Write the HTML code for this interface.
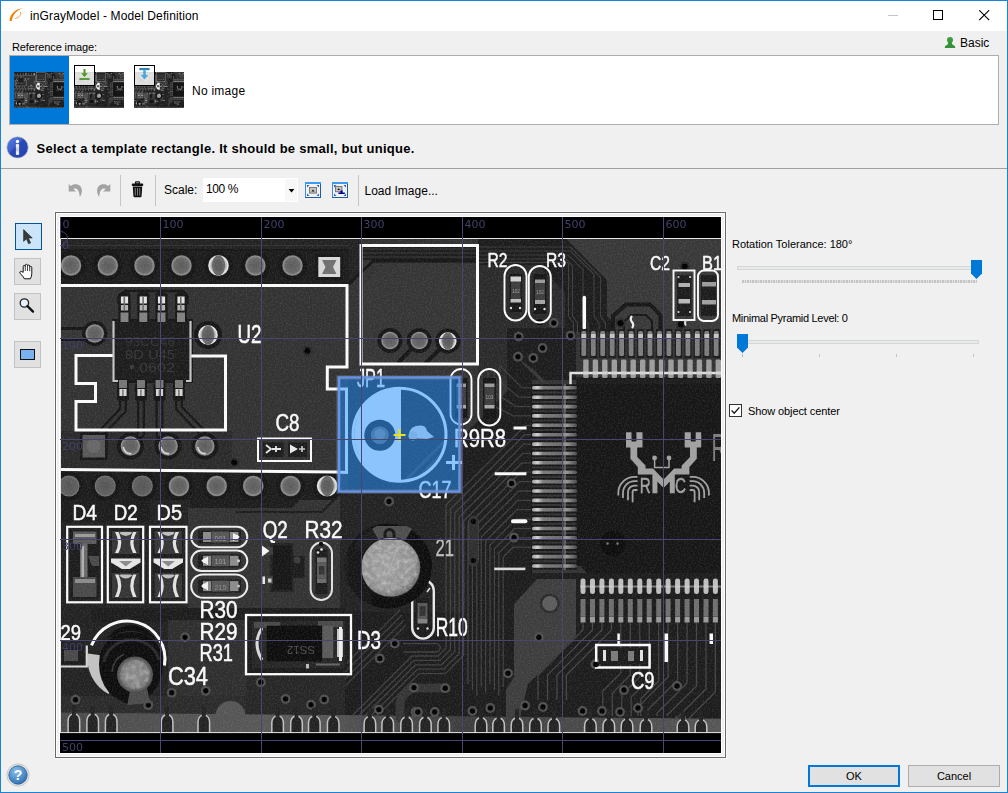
<!DOCTYPE html>
<html lang="en">
<head>
<meta charset="utf-8">
<title>inGrayModel - Model Definition</title>
<style>
html,body{margin:0;padding:0;}
body{width:1008px;height:793px;overflow:hidden;background:#f0f0f0;font-family:"Liberation Sans",sans-serif;font-size:12px;color:#000;position:relative;}
.abs{position:absolute;}
#win{position:absolute;left:0;top:0;width:1006px;height:791px;border:1px solid #1883d7;background:#f0f0f0;}
#title{position:absolute;left:1px;top:1px;width:1006px;height:30px;background:#fff;}
#title .t{position:absolute;left:29px;top:8px;font-size:12px;white-space:nowrap;letter-spacing:0.13px;}
.lbl{position:absolute;white-space:nowrap;}
#list{position:absolute;left:9px;top:55px;width:988px;height:68px;border:1px solid #adadad;background:#fff;}
#sel{position:absolute;left:10px;top:56px;width:59px;height:68px;background:#0078d7;}
.sep{position:absolute;background:#a0a0a0;}
.tool{position:absolute;width:25px;height:25px;border:1px solid #adadad;background:#e1e1e1;box-sizing:border-box;}
.btn{position:absolute;box-sizing:border-box;background:#e1e1e1;border:1px solid #adadad;text-align:center;font-size:12px;}
</style>
</head>
<body>
<div id="win"></div>
<div id="title">
  <svg class="abs" style="left:-1px;top:-1px" width="30" height="30" viewBox="0 0 30 30"><path d="M9.5 20.8 C9.8 14 15 9.2 23 7.9 C16.4 10.6 12.6 14.6 11.9 20.4 Q10.6 21.4 9.5 20.8 Z" fill="#f08000"/><path d="M20.5 12 C21.2 15 19.6 17.6 15.2 18.5" fill="none" stroke="#f39a35" stroke-width="0.9"/></svg>
  <span class="t">inGrayModel - Model Definition</span>
  <svg class="abs" style="left:887px;top:8px" width="12" height="12"><path d="M0 6.5H10" stroke="#c4c4c4" stroke-width="1"/></svg>
  <svg class="abs" style="left:932px;top:9px" width="12" height="12"><rect x="0.5" y="0.5" width="9" height="9" fill="none" stroke="#000" stroke-width="1"/></svg>
  <svg class="abs" style="left:978px;top:9px" width="12" height="12"><path d="M0.2 0.2L10.2 10.2M10.2 0.2L0.2 10.2" stroke="#000" stroke-width="1.1"/></svg>
</div>

<span class="lbl" style="left:12px;top:41px;font-size:11px;letter-spacing:-0.12px;">Reference image:</span>
<svg class="abs" style="left:944px;top:36px" width="12" height="13" viewBox="0 0 12 13"><circle cx="6" cy="4" r="3" fill="#3f9a3f"/><path d="M4.6 5.6 L3.6 8.6 L0.9 10.2 V12 H11.1 V10.2 L8.4 8.6 L7.4 5.6 Z" fill="#36913a"/></svg>
<span class="lbl" style="left:960px;top:36px;font-size:12px;">Basic</span>

<div id="list"></div>
<div id="sel"></div>
<svg width="0" height="0" style="position:absolute"><symbol id="th" viewBox="61 239 660 493.5" preserveAspectRatio="none"><rect x="60" y="238" width="662" height="496" fill="#323232" />
<rect x="60" y="238" width="289" height="48" fill="#1a1a1a" />
<rect x="60" y="238" width="289" height="13" fill="#242424" />
<polyline points="60,245.5 349,245.5" fill="none" stroke="#303030" stroke-width="1.2" />
<polyline points="60,250 349,250" fill="none" stroke="#181818" stroke-width="2" />
<rect x="60" y="431" width="172" height="38" fill="#2a2a2a" />
<polygon points="60,471 337,473 337,500 300,500 290,510 60,510" fill="#1a1a1a" />
<rect x="60" y="500" width="130" height="112" fill="#222" />
<rect x="60" y="500" width="90" height="22" fill="#1e1e1e" />
<rect x="188" y="508" width="157" height="104" fill="#303030" />
<polygon points="300,500 337,500 337,478 345,470 345,510 290,510" fill="#303030" />
<polygon points="349,238 361,238 361,272 349,284" fill="#222" />
<rect x="478" y="238" width="97" height="142" fill="#2b2b2b" />
<polygon points="566,238 722,238 722,332 613,332 613,323 607,316 607,280" fill="#383838" />
<polygon points="507,328 576,328 576,380 532,380 532,573 722,573 722,734 340,734 340,612 345,500 462,500 462,437 507,392" fill="#1d1d1d" />
<rect x="340" y="493" width="125" height="119" fill="#242424" />
<rect x="60" y="608" width="190" height="108" fill="#242424" />
<rect x="92" y="608" width="158" height="14" fill="#1a1a1a" />
<rect x="168" y="620" width="78" height="80" fill="#2e2e2e" />
<rect x="60" y="696" width="190" height="18" fill="#2c2c2c" />
<rect x="246" y="608" width="99" height="70" fill="#1e1e1e" />
<rect x="246" y="676" width="99" height="40" fill="#252525" />
<polygon points="60,712.5 722,718.8 722,734 60,734" fill="url(#bandg)" />
<circle cx="230.5" cy="716" r="15" fill="#555" />
<polygon points="537,579 576,579 576,636 528,684 522,709 520,718 506,718 506,690 514,677 514,604" fill="#3e3e3e" />
<circle cx="549.8" cy="603.5" r="10" fill="#2c2c2c" />
<circle cx="549.8" cy="603.5" r="7.5" fill="#5c5c5c" />
<polyline points="531,425.3 525.7,425.3 446,505 446,648 438,656 412,656 352,716" fill="none" stroke="#3f3f3f" stroke-width="1.3" stroke-linejoin="round"/>
<polyline points="531,434.7 524.7,434.7 450.4,509 450.4,649.8 439.8,660.4 413.8,660.4 358.2,716" fill="none" stroke="#3f3f3f" stroke-width="1.3" stroke-linejoin="round"/>
<polyline points="531,444.1 523.7,444.1 454.8,513 454.8,651.6 441.6,664.8 415.6,664.8 364.4,716" fill="none" stroke="#3f3f3f" stroke-width="1.3" stroke-linejoin="round"/>
<polyline points="531,453.4 522.8,453.4 459.2,517 459.2,653.5 443.5,669.2 417.5,669.2 370.6,716" fill="none" stroke="#3f3f3f" stroke-width="1.3" stroke-linejoin="round"/>
<polyline points="531,462.8 521.8,462.8 463.6,521 463.6,655.3 445.3,673.6 419.3,673.6 376.8,716" fill="none" stroke="#3f3f3f" stroke-width="1.3" stroke-linejoin="round"/>
<polyline points="531,472.2 520.8,472.2 468,525 468,684" fill="none" stroke="#3f3f3f" stroke-width="1.3" />
<polyline points="531,481.6 519.8,481.6 472.4,529 472.4,690" fill="none" stroke="#3f3f3f" stroke-width="1.3" />
<polyline points="531,491 518.8,491 476.8,533 476.8,696" fill="none" stroke="#3f3f3f" stroke-width="1.3" />
<polyline points="531,500.3 517.9,500.3 481.2,537 481.2,687" fill="none" stroke="#3f3f3f" stroke-width="1.3" />
<polyline points="531,509.7 516.9,509.7 485.6,541 485.6,693" fill="none" stroke="#3f3f3f" stroke-width="1.3" />
<polyline points="531,519.1 515.9,519.1 490,545 490,684" fill="none" stroke="#3f3f3f" stroke-width="1.3" />
<polyline points="531,528.5 514.9,528.5 494.4,549 494.4,690" fill="none" stroke="#3f3f3f" stroke-width="1.3" />
<polyline points="531,537.9 513.9,537.9 498.8,553 498.8,696" fill="none" stroke="#3f3f3f" stroke-width="1.3" />
<polyline points="531,547.2 513,547.2 503.2,557 503.2,687" fill="none" stroke="#3f3f3f" stroke-width="1.3" />
<path d="M403 643.6 H436 a4.2 4.2 0 0 1 0 8.4 H404" fill="none" stroke="#3f3f3f" stroke-width="1.3"/>
<polyline points="400,610 345,665" fill="none" stroke="#3a3a3a" stroke-width="1.2" />
<polyline points="402,615 345,672" fill="none" stroke="#3a3a3a" stroke-width="1.2" />
<polyline points="404,620 345,679" fill="none" stroke="#3a3a3a" stroke-width="1.2" />
<polyline points="406,625 345,686" fill="none" stroke="#3a3a3a" stroke-width="1.2" />
<path d="M400 718 V706 Q400 692 414 688 H446" fill="none" stroke="#343434" stroke-width="9" stroke-linecap="round"/>
<polyline points="531,387.8 522,387.8 500,365.8 500,372" fill="none" stroke="#3c3c3c" stroke-width="1.2" />
<polyline points="531,397.2 519,397.2 494,377.2 494,372" fill="none" stroke="#3c3c3c" stroke-width="1.2" />
<polyline points="531,406.6 516,406.6 488,388.6 488,372" fill="none" stroke="#3c3c3c" stroke-width="1.2" />
<polyline points="531,415.9 513,415.9 482,399.9 482,372" fill="none" stroke="#3c3c3c" stroke-width="1.2" />
<polyline points="583,623 583,630 538,675 538,700" fill="none" stroke="#454545" stroke-width="1.2" />
<polyline points="592.5,623 592.5,630 547.5,675 547.5,700" fill="none" stroke="#454545" stroke-width="1.2" />
<polyline points="601.9,623 601.9,630 556.9,675 556.9,700" fill="none" stroke="#454545" stroke-width="1.2" />
<polyline points="611.4,623 611.4,630 566.4,675 566.4,700" fill="none" stroke="#454545" stroke-width="1.2" />
<polyline points="620.8,623 620.8,673 602.8,691 602.8,716" fill="none" stroke="#454545" stroke-width="1.2" />
<polyline points="630.3,623 630.3,675 612.3,693 612.3,716" fill="none" stroke="#454545" stroke-width="1.2" />
<polyline points="639.8,623 639.8,677 621.8,695 621.8,716" fill="none" stroke="#454545" stroke-width="1.2" />
<polyline points="649.2,623 649.2,679 631.2,697 631.2,716" fill="none" stroke="#454545" stroke-width="1.2" />
<polyline points="658.7,623 658.7,681 640.7,699 640.7,716" fill="none" stroke="#454545" stroke-width="1.2" />
<polyline points="668.1,623 668.1,677 638.1,707 638.1,716" fill="none" stroke="#454545" stroke-width="1.2" />
<polyline points="677.6,623 677.6,680 647.6,710 647.6,716" fill="none" stroke="#454545" stroke-width="1.2" />
<polyline points="687.1,623 687.1,683 657.1,713 657.1,716" fill="none" stroke="#454545" stroke-width="1.2" />
<polyline points="696.5,623 696.5,686 666.5,716 666.5,716" fill="none" stroke="#454545" stroke-width="1.2" />
<polyline points="706,623 706,689 676,719 676,716" fill="none" stroke="#454545" stroke-width="1.2" />
<polyline points="715.4,623 715.4,692 685.4,722 685.4,716" fill="none" stroke="#454545" stroke-width="1.2" />
<polygon points="478,239 566,239 607,280 607,316 613,323 613,332 565,332 565,292 538,265 478,265" fill="#1b1b1b" />
<polyline points="478,247 570.2,247 600.5,277.3 600.5,316 605.5,323 605.5,332" fill="none" stroke="#3c3c3c" stroke-width="1.2" />
<polyline points="478,251 570.5,251 594,274.5 594,316 599,323 599,332" fill="none" stroke="#3c3c3c" stroke-width="1.2" />
<polyline points="478,255 568.1,255 583,269.9 583,316 588,323 588,332" fill="none" stroke="#3c3c3c" stroke-width="1.2" />
<polyline points="478,259 566,259 572.5,265.5 572.5,316 577.5,323 577.5,332" fill="none" stroke="#3c3c3c" stroke-width="1.2" />
<polyline points="478,262.3 567,262.3 568.5,263.8 568.5,316 573.5,323 573.5,332" fill="none" stroke="#3c3c3c" stroke-width="1.2" />
<polyline points="613,330 613,316 626,304.5 650,304.5 660.5,315 660.5,332" fill="none" stroke="#181818" stroke-width="4" />
<polyline points="624,332 624,322 631,315 646,315 652,321 652,332" fill="none" stroke="#181818" stroke-width="2" />
<polyline points="520,360 545,385 531,400" fill="none" stroke="#3a3a3a" stroke-width="1.1" />
<polyline points="524,363 549,388 531,409" fill="none" stroke="#3a3a3a" stroke-width="1.1" />
<polyline points="528,366 553,391 531,418" fill="none" stroke="#3a3a3a" stroke-width="1.1" />
<polyline points="532,369 557,394 531,427" fill="none" stroke="#3a3a3a" stroke-width="1.1" />
<polygon points="362,286 386,262 476,262 476,363 362,363" fill="#343434" />
<rect x="362" y="246" width="114" height="14" fill="#1e1e1e" />
<polyline points="362,249 476,249" fill="none" stroke="#353535" stroke-width="1" />
<polyline points="362,253 476,253" fill="none" stroke="#353535" stroke-width="1" />
<polyline points="362,257 476,257" fill="none" stroke="#353535" stroke-width="1" />
<polyline points="349,284 373,261 476,261" fill="none" stroke="#151515" stroke-width="3" />
<polyline points="448,341 424,365" fill="none" stroke="#171717" stroke-width="4" />
<polyline points="419,341 398,363" fill="none" stroke="#171717" stroke-width="4" />
<polyline points="123,397 123,410 103,431 97,438" fill="none" stroke="#161616" stroke-width="8" stroke-linejoin="round"/>
<polyline points="123,397 123,410 103,431 97,438" fill="none" stroke="#333" stroke-width="3.5" stroke-linejoin="round"/>
<polyline points="141,397 141,434 134,441" fill="none" stroke="#161616" stroke-width="8" stroke-linejoin="round"/>
<polyline points="141,397 141,434 134,441" fill="none" stroke="#333" stroke-width="3.5" stroke-linejoin="round"/>
<polyline points="159.5,397 159.5,436 165,442" fill="none" stroke="#161616" stroke-width="8" stroke-linejoin="round"/>
<polyline points="159.5,397 159.5,436 165,442" fill="none" stroke="#333" stroke-width="3.5" stroke-linejoin="round"/>
<polyline points="179,397 179,408 201,431 204,438" fill="none" stroke="#161616" stroke-width="8" stroke-linejoin="round"/>
<polyline points="179,397 179,408 201,431 204,438" fill="none" stroke="#333" stroke-width="3.5" stroke-linejoin="round"/>
<rect x="60" y="327" width="35" height="14" fill="#191919" />
<rect x="60" y="330" width="35" height="8" fill="#363636" />
<polyline points="236,512 322,512 345,489" fill="none" stroke="#1b1b1b" stroke-width="2" />
<circle cx="71" cy="265.5" r="14" fill="#161616" />
<circle cx="71" cy="265.5" r="10.5" fill="url(#pg)" />
<circle cx="107.8" cy="265.5" r="14" fill="#161616" />
<circle cx="107.8" cy="265.5" r="10.5" fill="url(#pg)" />
<circle cx="144.5" cy="265.5" r="14" fill="#161616" />
<circle cx="144.5" cy="265.5" r="10.5" fill="url(#pg)" />
<circle cx="181.5" cy="265.5" r="14" fill="#161616" />
<circle cx="181.5" cy="265.5" r="10.5" fill="url(#pg)" />
<circle cx="218.5" cy="265.5" r="14" fill="#161616" />
<circle cx="218.5" cy="265.5" r="10.5" fill="url(#pgb)" />
<ellipse cx="218.5" cy="265.5" rx="6.5" ry="10.3" fill="#686868"/>
<ellipse cx="218.5" cy="265.5" rx="4.2" ry="6.3" fill="#5c5c5c"/>
<circle cx="255.4" cy="265.5" r="14" fill="#161616" />
<circle cx="255.4" cy="265.5" r="10.5" fill="url(#pg)" />
<circle cx="292.5" cy="265.5" r="14" fill="#161616" />
<circle cx="292.5" cy="265.5" r="10.5" fill="url(#pg)" />
<rect x="315" y="254" width="28" height="26" fill="#141414" />
<rect x="318.3" y="257" width="21.9" height="20" fill="#d8d8d8" />
<polygon points="322,260 336.5,260 333,267 336.5,274 322,274 325.5,267" fill="#707070" />
<rect x="80" y="432.5" width="27.5" height="27.5" fill="#151515" />
<rect x="82.5" y="435" width="22.5" height="22.5" fill="#585858" />
<circle cx="93.7" cy="446" r="7" fill="#666" />
<circle cx="130.4" cy="446" r="13.5" fill="#161616" />
<circle cx="130.4" cy="446" r="10" fill="url(#pg)" />
<path d="M123.4 447 A7 7 0 0 0 131.4 453.5" stroke="#d8d8d8" stroke-width="1.6" fill="none"/>
<circle cx="168.1" cy="446" r="13.5" fill="#161616" />
<circle cx="168.1" cy="446" r="10" fill="url(#pg)" />
<path d="M161.1 447 A7 7 0 0 0 169.1 453.5" stroke="#d8d8d8" stroke-width="1.6" fill="none"/>
<circle cx="204.8" cy="446" r="13.5" fill="#161616" />
<circle cx="204.8" cy="446" r="10" fill="url(#pg)" />
<path d="M197.8 447 A7 7 0 0 0 205.8 453.5" stroke="#d8d8d8" stroke-width="1.6" fill="none"/>
<circle cx="69" cy="486" r="14" fill="#161616" />
<circle cx="69" cy="486" r="10.5" fill="url(#pgd)" />
<circle cx="105.2" cy="486" r="14" fill="#161616" />
<circle cx="105.2" cy="486" r="10.5" fill="url(#pgd)" />
<circle cx="142.3" cy="486" r="14" fill="#161616" />
<circle cx="142.3" cy="486" r="10.5" fill="url(#pgd)" />
<circle cx="179" cy="486" r="14" fill="#161616" />
<circle cx="179" cy="486" r="10.5" fill="url(#pg)" />
<circle cx="216.7" cy="486" r="14" fill="#161616" />
<circle cx="216.7" cy="486" r="10.5" fill="url(#pg)" />
<circle cx="253.2" cy="486" r="14" fill="#161616" />
<circle cx="253.2" cy="486" r="10.5" fill="url(#pg)" />
<circle cx="290.5" cy="486" r="14" fill="#161616" />
<circle cx="290.5" cy="486" r="10.5" fill="url(#pg)" />
<circle cx="327.2" cy="486" r="14" fill="#161616" />
<circle cx="327.2" cy="486" r="10.5" fill="url(#pgb)" />
<ellipse cx="327.2" cy="486" rx="6.5" ry="10.3" fill="#686868"/>
<ellipse cx="327.2" cy="486" rx="4.2" ry="6.3" fill="#5c5c5c"/>
<circle cx="94.7" cy="333.5" r="12.5" fill="#161616" />
<circle cx="94.7" cy="333.5" r="9.5" fill="url(#pg)" />
<circle cx="208" cy="335" r="14" fill="#161616" />
<circle cx="208" cy="335" r="10" fill="url(#pgb)" />
<ellipse cx="208" cy="335" rx="6.2" ry="9.8" fill="#686868"/>
<ellipse cx="208" cy="335" rx="4" ry="6" fill="#5c5c5c"/>
<circle cx="390" cy="340.5" r="12.5" fill="#161616" />
<circle cx="390" cy="340.5" r="9" fill="url(#pg)" />
<circle cx="419.2" cy="340.5" r="12.5" fill="#161616" />
<circle cx="419.2" cy="340.5" r="9" fill="url(#pg)" />
<circle cx="447.8" cy="341" r="12.5" fill="#161616" />
<circle cx="447.8" cy="341" r="9" fill="url(#pgb)" />
<ellipse cx="447.8" cy="341" rx="5.6" ry="8.8" fill="#686868"/>
<ellipse cx="447.8" cy="341" rx="3.6" ry="5.4" fill="#5c5c5c"/>
<circle cx="234.2" cy="462.6" r="5" fill="#2a2a2a" />
<circle cx="234.2" cy="462.6" r="3" fill="#050505" />
<circle cx="307.4" cy="350.7" r="5" fill="#2a2a2a" />
<circle cx="307.4" cy="350.7" r="3" fill="#050505" />
<circle cx="539.9" cy="322.3" r="5" fill="#2a2a2a" />
<circle cx="539.9" cy="322.3" r="3" fill="#050505" />
<circle cx="684.8" cy="266.4" r="5" fill="#2a2a2a" />
<circle cx="684.8" cy="266.4" r="3" fill="#050505" />
<circle cx="681" cy="324.6" r="5" fill="#2a2a2a" />
<circle cx="681" cy="324.6" r="3" fill="#050505" />
<circle cx="620.5" cy="323" r="5" fill="#2a2a2a" />
<circle cx="620.5" cy="323" r="3" fill="#050505" />
<circle cx="553.8" cy="323" r="4.9" fill="#505050" />
<circle cx="553.8" cy="323" r="2.7" fill="#050505" />
<circle cx="518.7" cy="336.6" r="4.9" fill="#505050" />
<circle cx="518.7" cy="336.6" r="2.7" fill="#050505" />
<circle cx="542.5" cy="348" r="4.9" fill="#505050" />
<circle cx="542.5" cy="348" r="2.7" fill="#050505" />
<circle cx="518" cy="356.7" r="4.9" fill="#505050" />
<circle cx="518" cy="356.7" r="2.7" fill="#050505" />
<circle cx="533.3" cy="358" r="4.9" fill="#505050" />
<circle cx="533.3" cy="358" r="2.7" fill="#050505" />
<circle cx="570.6" cy="335.6" r="4.9" fill="#505050" />
<circle cx="570.6" cy="335.6" r="2.7" fill="#050505" />
<circle cx="511.5" cy="483.4" r="4.9" fill="#505050" />
<circle cx="511.5" cy="483.4" r="2.7" fill="#050505" />
<circle cx="389" cy="501.5" r="4.9" fill="#505050" />
<circle cx="389" cy="501.5" r="2.7" fill="#050505" />
<circle cx="185" cy="637.2" r="4.9" fill="#505050" />
<circle cx="185" cy="637.2" r="2.7" fill="#050505" />
<circle cx="75.5" cy="699.7" r="4.9" fill="#505050" />
<circle cx="75.5" cy="699.7" r="2.7" fill="#050505" />
<circle cx="148.3" cy="705" r="4.9" fill="#505050" />
<circle cx="148.3" cy="705" r="2.7" fill="#050505" />
<circle cx="171.7" cy="692.8" r="4.9" fill="#505050" />
<circle cx="171.7" cy="692.8" r="2.7" fill="#050505" />
<circle cx="205.8" cy="690.8" r="4.9" fill="#505050" />
<circle cx="205.8" cy="690.8" r="2.7" fill="#050505" />
<circle cx="260.8" cy="682.3" r="4.9" fill="#505050" />
<circle cx="260.8" cy="682.3" r="2.7" fill="#050505" />
<circle cx="285.6" cy="699" r="4.9" fill="#505050" />
<circle cx="285.6" cy="699" r="2.7" fill="#050505" />
<circle cx="311" cy="704.7" r="4.9" fill="#505050" />
<circle cx="311" cy="704.7" r="2.7" fill="#050505" />
<circle cx="324.2" cy="699.5" r="4.9" fill="#505050" />
<circle cx="324.2" cy="699.5" r="2.7" fill="#050505" />
<circle cx="379.8" cy="658.5" r="4.9" fill="#505050" />
<circle cx="379.8" cy="658.5" r="2.7" fill="#050505" />
<circle cx="378.8" cy="709.6" r="4.9" fill="#505050" />
<circle cx="378.8" cy="709.6" r="2.7" fill="#050505" />
<circle cx="415.5" cy="712" r="4.9" fill="#505050" />
<circle cx="415.5" cy="712" r="2.7" fill="#050505" />
<circle cx="394.7" cy="643.6" r="4.9" fill="#505050" />
<circle cx="394.7" cy="643.6" r="2.7" fill="#050505" />
<circle cx="538.9" cy="637.2" r="4.9" fill="#505050" />
<circle cx="538.9" cy="637.2" r="2.7" fill="#050505" />
<circle cx="508" cy="673.3" r="4.9" fill="#505050" />
<circle cx="508" cy="673.3" r="2.7" fill="#050505" />
<circle cx="445.2" cy="688.2" r="4.9" fill="#505050" />
<circle cx="445.2" cy="688.2" r="2.7" fill="#050505" />
<circle cx="413.9" cy="687.6" r="4.9" fill="#505050" />
<circle cx="413.9" cy="687.6" r="2.7" fill="#050505" />
<circle cx="417.9" cy="712" r="4.9" fill="#505050" />
<circle cx="417.9" cy="712" r="2.7" fill="#050505" />
<circle cx="434.7" cy="712" r="4.9" fill="#505050" />
<circle cx="434.7" cy="712" r="2.7" fill="#050505" />
<circle cx="472.4" cy="711" r="4.9" fill="#505050" />
<circle cx="472.4" cy="711" r="2.7" fill="#050505" />
<circle cx="490.3" cy="708" r="4.9" fill="#505050" />
<circle cx="490.3" cy="708" r="2.7" fill="#050505" />
<circle cx="525" cy="705.5" r="4.9" fill="#505050" />
<circle cx="525" cy="705.5" r="2.7" fill="#050505" />
<circle cx="542.9" cy="707" r="4.9" fill="#505050" />
<circle cx="542.9" cy="707" r="2.7" fill="#050505" />
<circle cx="582.5" cy="711" r="4.9" fill="#505050" />
<circle cx="582.5" cy="711" r="2.7" fill="#050505" />
<circle cx="595.4" cy="664.4" r="4.9" fill="#505050" />
<circle cx="595.4" cy="664.4" r="2.7" fill="#050505" />
<circle cx="473.4" cy="521.5" r="4.9" fill="#505050" />
<circle cx="473.4" cy="521.5" r="2.7" fill="#050505" />
<circle cx="473.4" cy="560.5" r="4.9" fill="#505050" />
<circle cx="473.4" cy="560.5" r="2.7" fill="#050505" />
<circle cx="514" cy="537.5" r="4.9" fill="#505050" />
<circle cx="514" cy="537.5" r="2.7" fill="#050505" />
<circle cx="624" cy="690" r="4.9" fill="#505050" />
<circle cx="624" cy="690" r="2.7" fill="#050505" />
<circle cx="677" cy="686" r="4.9" fill="#505050" />
<circle cx="677" cy="686" r="2.7" fill="#050505" />
<circle cx="638" cy="708" r="4.9" fill="#505050" />
<circle cx="638" cy="708" r="2.7" fill="#050505" />
<circle cx="602" cy="711" r="4.9" fill="#505050" />
<circle cx="602" cy="711" r="2.7" fill="#050505" />
<circle cx="620" cy="712" r="4.9" fill="#505050" />
<circle cx="620" cy="712" r="2.7" fill="#050505" />
<circle cx="596" cy="664" r="4.9" fill="#505050" />
<circle cx="596" cy="664" r="2.7" fill="#050505" />
<rect x="468.5" y="516.5" width="10" height="49" rx="5" fill="#2e2e2e" stroke="#3a3a3a" stroke-width="1"/>
<circle cx="473.4" cy="521.5" r="2.6" fill="#050505" />
<circle cx="473.4" cy="560.5" r="2.6" fill="#050505" />
<rect x="112" y="319" width="81" height="64" fill="#181818" />
<rect x="115" y="321.5" width="75" height="59" fill="#1d1d1d" />
<polyline points="118.5,304 118.5,297 125,291 183,291 187.5,296 187.5,304" fill="none" stroke="#161616" stroke-width="2.5" />
<rect x="118.5" y="292.5" width="12" height="30" rx="3" fill="#141414"/>
<rect x="120.9" y="296.5" width="7.2" height="7" fill="#e4e4e4" />
<rect x="120.9" y="305" width="7.2" height="5.5" fill="#b4b4b4" />
<rect x="123.5" y="297" width="1.6" height="13" fill="#6a6a6a" />
<rect x="120.5" y="312.5" width="8" height="9.5" fill="#808080" />
<rect x="137.3" y="292.5" width="12" height="30" rx="3" fill="#141414"/>
<rect x="139.7" y="296.5" width="7.2" height="7" fill="#e4e4e4" />
<rect x="139.7" y="305" width="7.2" height="5.5" fill="#b4b4b4" />
<rect x="142.3" y="297" width="1.6" height="13" fill="#6a6a6a" />
<rect x="139.3" y="312.5" width="8" height="9.5" fill="#808080" />
<rect x="155.5" y="292.5" width="12" height="30" rx="3" fill="#141414"/>
<rect x="157.9" y="296.5" width="7.2" height="7" fill="#e4e4e4" />
<rect x="157.9" y="305" width="7.2" height="5.5" fill="#b4b4b4" />
<rect x="160.5" y="297" width="1.6" height="13" fill="#6a6a6a" />
<rect x="157.5" y="312.5" width="8" height="9.5" fill="#808080" />
<rect x="175" y="292.5" width="12" height="30" rx="3" fill="#141414"/>
<rect x="177.4" y="296.5" width="7.2" height="7" fill="#e4e4e4" />
<rect x="177.4" y="305" width="7.2" height="5.5" fill="#b4b4b4" />
<rect x="180" y="297" width="1.6" height="13" fill="#6a6a6a" />
<rect x="177" y="312.5" width="8" height="9.5" fill="#808080" />
<rect x="117" y="379" width="12" height="22" rx="3" fill="#141414"/>
<rect x="119" y="380" width="8" height="8" fill="#747474" />
<rect x="119.4" y="389" width="7.2" height="7" fill="#d4d4d4" />
<rect x="122.2" y="389.5" width="1.4" height="6.5" fill="#6a6a6a" />
<rect x="135" y="379" width="12" height="22" rx="3" fill="#141414"/>
<rect x="137" y="380" width="8" height="8" fill="#747474" />
<rect x="137.4" y="389" width="7.2" height="7" fill="#d4d4d4" />
<rect x="140.2" y="389.5" width="1.4" height="6.5" fill="#6a6a6a" />
<rect x="153.5" y="379" width="12" height="22" rx="3" fill="#141414"/>
<rect x="155.5" y="380" width="8" height="8" fill="#747474" />
<rect x="155.9" y="389" width="7.2" height="7" fill="#d4d4d4" />
<rect x="158.7" y="389.5" width="1.4" height="6.5" fill="#6a6a6a" />
<rect x="173" y="379" width="12" height="22" rx="3" fill="#141414"/>
<rect x="175" y="380" width="8" height="8" fill="#747474" />
<rect x="175.4" y="389" width="7.2" height="7" fill="#d4d4d4" />
<rect x="178.2" y="389.5" width="1.4" height="6.5" fill="#6a6a6a" />
<circle cx="132" cy="367" r="2.3" fill="#383838" />
<polyline points="60,285.5 347,285.5 347,367 327.3,367 327.3,389 346.5,389 346.5,472.5 336,472 60,469.5" fill="none" stroke="#fafafa" stroke-width="3" stroke-linejoin="miter"/>
<polyline points="113.5,355.5 76,355.5 76,383.5 95.5,383.5 95.5,401.5 76,401.5 76,430 225.5,430 225.5,356 190.5,356" fill="none" stroke="#fafafa" stroke-width="3" />
<polyline points="113.5,321 113.5,381 118,381" fill="none" stroke="#c4c4c4" stroke-width="2.2" />
<polyline points="190.5,321 190.5,381 186,381" fill="none" stroke="#c4c4c4" stroke-width="2.2" />
<rect x="361" y="245.5" width="116.5" height="118.5" rx="0" fill="none" stroke="#fafafa" stroke-width="3"/>
<rect x="348.5" y="378" width="113.5" height="116" fill="#2a2a2a" />
<g clip-path="url(#c17clip)">
<polyline points="396,490 456,430" fill="none" stroke="#424242" stroke-width="3" />
<polyline points="406,490 466,430" fill="none" stroke="#424242" stroke-width="3" />
<polyline points="416,490 476,430" fill="none" stroke="#424242" stroke-width="3" />
<polyline points="426,490 486,430" fill="none" stroke="#424242" stroke-width="3" />
<polyline points="436,490 496,430" fill="none" stroke="#424242" stroke-width="3" />
<polyline points="446,490 506,430" fill="none" stroke="#424242" stroke-width="3" />
<polyline points="456,490 516,430" fill="none" stroke="#424242" stroke-width="3" />
<polyline points="466,490 526,430" fill="none" stroke="#424242" stroke-width="3" />
<polyline points="476,490 536,430" fill="none" stroke="#424242" stroke-width="3" />
</g>
<circle cx="399.5" cy="434.8" r="46.5" fill="none" stroke="#fafafa" stroke-width="3"/>
<path d="M401 388 A46.8 46.8 0 0 0 401 481.6 Z" fill="#fafafa"/>
<circle cx="379.8" cy="435.2" r="15.5" fill="#262626" />
<circle cx="379.8" cy="435.2" r="9" fill="#6a6a6a" />
<circle cx="379.8" cy="434.2" r="5.5" fill="#8a8a8a" />
<path d="M409 438 Q408 428 416 426 Q426 424 427 431 L434 437 L427 439 Z" fill="#e4e4e4"/>
<circle cx="413" cy="436" r="4.5" fill="#d0d0d0" />
<rect x="258" y="438.5" width="53" height="22.5" rx="0" fill="none" stroke="#fafafa" stroke-width="2"/>
<rect x="263" y="442.5" width="20.5" height="14.5" fill="#1a1a1a" />
<rect x="288" y="442.5" width="19" height="14.5" fill="#1a1a1a" />
<path d="M266 445 l5 4 l-5 4 M272 449 h9 M276 446 v6" stroke="#e8e8e8" stroke-width="1.8" fill="none"/>
<path d="M290 444.5 l8 4.5 l-8 4.5 z" fill="#e8e8e8"/><path d="M299 449 h6 M302 446 v6" stroke="#ccc" stroke-width="1.6"/>
<rect x="504.5" y="265" width="22" height="55.5" rx="11" ry="11" fill="none" stroke="#fafafa" stroke-width="1.9"/>
<rect x="528.8" y="266" width="22" height="56.5" rx="11" ry="11" fill="none" stroke="#fafafa" stroke-width="1.9"/>
<rect x="509.5" y="274" width="12.5" height="38" fill="#191919" />
<rect x="511" y="281" width="9.5" height="18" fill="#3c3c3c" />
<rect x="510.5" y="276.5" width="10.5" height="5" fill="#d0d0d0" />
<rect x="510.5" y="299" width="10.5" height="3.5" fill="#bbb" />
<circle cx="511" cy="308" r="1.2" fill="#ddd" />
<circle cx="520" cy="308" r="1.2" fill="#ddd" />
<rect x="533.5" y="274" width="13" height="40" fill="#191919" />
<rect x="535" y="283" width="10" height="17" fill="#3e3e3e" />
<rect x="535" y="279.5" width="10" height="3.5" fill="#9a9a9a" />
<rect x="535" y="300" width="10" height="4" fill="#a5a5a5" />
<circle cx="535" cy="309" r="1.2" fill="#ddd" />
<circle cx="544.5" cy="309" r="1.2" fill="#ddd" />
<rect x="450.5" y="369" width="21" height="55.5" rx="10.5" ry="10.5" fill="none" stroke="#fafafa" stroke-width="1.9"/>
<rect x="478.2" y="369" width="22.1" height="56.5" rx="11.1" ry="11.1" fill="none" stroke="#fafafa" stroke-width="1.9"/>
<rect x="483" y="378" width="13" height="40" fill="#191919" />
<rect x="484.5" y="387" width="10" height="18" fill="#3e3e3e" />
<rect x="484.5" y="383.5" width="10" height="3.5" fill="#9a9a9a" />
<rect x="484.5" y="405" width="10" height="3.5" fill="#a5a5a5" />
<rect x="455" y="378" width="12.5" height="40" fill="#191919" />
<rect x="456.5" y="387" width="9.5" height="18" fill="#3e3e3e" />
<rect x="456.5" y="383.5" width="9.5" height="3.5" fill="#9a9a9a" />
<rect x="456.5" y="405" width="9.5" height="3.5" fill="#a5a5a5" />
<rect x="673.5" y="270.5" width="21" height="49.5" rx="0" fill="none" stroke="#fafafa" stroke-width="1.9"/>
<rect x="698" y="270.5" width="20" height="50.5" rx="6" fill="none" stroke="#fafafa" stroke-width="1.9"/>
<rect x="677" y="275" width="14.5" height="41" fill="#1a1a1a" />
<rect x="678.5" y="283" width="11.5" height="4" fill="#b0b0b0" />
<rect x="678.5" y="299" width="11.5" height="4.5" fill="#b8b8b8" />
<rect x="701" y="275" width="15" height="41" fill="#1a1a1a" />
<rect x="702" y="282" width="14" height="4.5" fill="#9a9a9a" />
<rect x="702" y="300" width="14" height="4.5" fill="#a0a0a0" />
<circle cx="678.5" cy="277" r="1.1" fill="#ddd" />
<circle cx="690" cy="277" r="1.1" fill="#ddd" />
<circle cx="678.5" cy="312" r="1.1" fill="#ddd" />
<circle cx="690" cy="312" r="1.1" fill="#ddd" />
<polyline points="584.3,297.5 584.3,328" fill="none" stroke="#fafafa" stroke-width="3.5" stroke-linecap="round"/>
<polyline points="513.5,428 526.5,428" fill="none" stroke="#fafafa" stroke-width="3" />
<polyline points="494.7,473.7 526.4,473.7" fill="none" stroke="#fafafa" stroke-width="3" />
<polyline points="513,521.3 525.4,521.3" fill="none" stroke="#fafafa" stroke-width="4" stroke-linecap="round"/>
<polyline points="494.2,568.9 525.4,568.9" fill="none" stroke="#d8d8d8" stroke-width="2.6" />
<polyline points="666.3,633.5 666.3,662" fill="none" stroke="#fafafa" stroke-width="3.5" />
<polyline points="711.3,633.5 711.3,644" fill="none" stroke="#fafafa" stroke-width="3.5" />
<polyline points="618.6,633.5 618.6,645" fill="none" stroke="#fafafa" stroke-width="2.5" />
<path d="M632 316 q-2.5 3 0 6 q2.5 3 0 6" stroke="#eee" stroke-width="2.2" fill="none"/>
<path d="M686 320 q-2 3 0 5.5" stroke="#ddd" stroke-width="2" fill="none"/>
<polyline points="446,462.5 462.5,462.5" fill="none" stroke="#fafafa" stroke-width="3" />
<polyline points="453.5,455 453.5,470" fill="none" stroke="#fafafa" stroke-width="3" />
<polyline points="570.5,386 570.5,373 722,373" fill="none" stroke="#e0e0e0" stroke-width="2.5" />
<polygon points="576.5,377.5 722,377.5 722,573 587,573 580.5,566 576.5,566" fill="#161616" />
<rect x="578" y="379" width="144" height="5" fill="#1c1c1c" />
<circle cx="613" cy="543.5" r="13" fill="#111" />
<circle cx="607.5" cy="543.5" r="1.2" fill="#777" />
<circle cx="617.5" cy="543.5" r="1.2" fill="#777" />
<rect x="580.2" y="329" width="7.2" height="29" fill="#1b1b1b" />
<rect x="581.4" y="331" width="4.8" height="25" rx="1.5" fill="#7c7c7c"/>
<rect x="581.4" y="334" width="4.8" height="4.5" fill="#c4c4c4" />
<rect x="583.2" y="359.5" width="5.4" height="18.5" rx="1.2" fill="#9c9c9c"/>
<rect x="583.2" y="371.5" width="5.4" height="3" fill="#d2d2d2" />
<rect x="589.7" y="329" width="7.2" height="29" fill="#1b1b1b" />
<rect x="590.9" y="331" width="4.8" height="25" rx="1.5" fill="#7c7c7c"/>
<rect x="590.9" y="334" width="4.8" height="4.5" fill="#c4c4c4" />
<rect x="592.7" y="359.5" width="5.4" height="18.5" rx="1.2" fill="#9c9c9c"/>
<rect x="592.7" y="371.5" width="5.4" height="3" fill="#d2d2d2" />
<rect x="599.1" y="329" width="7.2" height="29" fill="#1b1b1b" />
<rect x="600.3" y="331" width="4.8" height="25" rx="1.5" fill="#7c7c7c"/>
<rect x="600.3" y="334" width="4.8" height="4.5" fill="#c4c4c4" />
<rect x="602.1" y="359.5" width="5.4" height="18.5" rx="1.2" fill="#9c9c9c"/>
<rect x="602.1" y="371.5" width="5.4" height="3" fill="#d2d2d2" />
<rect x="608.6" y="329" width="7.2" height="29" fill="#1b1b1b" />
<rect x="609.8" y="331" width="4.8" height="25" rx="1.5" fill="#7c7c7c"/>
<rect x="609.8" y="334" width="4.8" height="4.5" fill="#c4c4c4" />
<rect x="611.6" y="359.5" width="5.4" height="18.5" rx="1.2" fill="#9c9c9c"/>
<rect x="611.6" y="371.5" width="5.4" height="3" fill="#d2d2d2" />
<rect x="618" y="329" width="7.2" height="29" fill="#1b1b1b" />
<rect x="619.2" y="331" width="4.8" height="25" rx="1.5" fill="#7c7c7c"/>
<rect x="619.2" y="334" width="4.8" height="4.5" fill="#c4c4c4" />
<rect x="621" y="359.5" width="5.4" height="18.5" rx="1.2" fill="#9c9c9c"/>
<rect x="621" y="371.5" width="5.4" height="3" fill="#d2d2d2" />
<rect x="627.5" y="329" width="7.2" height="29" fill="#1b1b1b" />
<rect x="628.7" y="331" width="4.8" height="25" rx="1.5" fill="#7c7c7c"/>
<rect x="628.7" y="334" width="4.8" height="4.5" fill="#c4c4c4" />
<rect x="630.5" y="359.5" width="5.4" height="18.5" rx="1.2" fill="#9c9c9c"/>
<rect x="630.5" y="371.5" width="5.4" height="3" fill="#d2d2d2" />
<rect x="637" y="329" width="7.2" height="29" fill="#1b1b1b" />
<rect x="638.2" y="331" width="4.8" height="25" rx="1.5" fill="#7c7c7c"/>
<rect x="638.2" y="334" width="4.8" height="4.5" fill="#c4c4c4" />
<rect x="640" y="359.5" width="5.4" height="18.5" rx="1.2" fill="#9c9c9c"/>
<rect x="640" y="371.5" width="5.4" height="3" fill="#d2d2d2" />
<rect x="646.4" y="329" width="7.2" height="29" fill="#1b1b1b" />
<rect x="647.6" y="331" width="4.8" height="25" rx="1.5" fill="#7c7c7c"/>
<rect x="647.6" y="334" width="4.8" height="4.5" fill="#c4c4c4" />
<rect x="649.4" y="359.5" width="5.4" height="18.5" rx="1.2" fill="#9c9c9c"/>
<rect x="649.4" y="371.5" width="5.4" height="3" fill="#d2d2d2" />
<rect x="655.9" y="329" width="7.2" height="29" fill="#1b1b1b" />
<rect x="657.1" y="331" width="4.8" height="25" rx="1.5" fill="#7c7c7c"/>
<rect x="657.1" y="334" width="4.8" height="4.5" fill="#c4c4c4" />
<rect x="658.9" y="359.5" width="5.4" height="18.5" rx="1.2" fill="#9c9c9c"/>
<rect x="658.9" y="371.5" width="5.4" height="3" fill="#d2d2d2" />
<rect x="665.3" y="329" width="7.2" height="29" fill="#1b1b1b" />
<rect x="666.5" y="331" width="4.8" height="25" rx="1.5" fill="#7c7c7c"/>
<rect x="666.5" y="334" width="4.8" height="4.5" fill="#c4c4c4" />
<rect x="668.3" y="359.5" width="5.4" height="18.5" rx="1.2" fill="#9c9c9c"/>
<rect x="668.3" y="371.5" width="5.4" height="3" fill="#d2d2d2" />
<rect x="674.8" y="329" width="7.2" height="29" fill="#1b1b1b" />
<rect x="676" y="331" width="4.8" height="25" rx="1.5" fill="#7c7c7c"/>
<rect x="676" y="334" width="4.8" height="4.5" fill="#c4c4c4" />
<rect x="677.8" y="359.5" width="5.4" height="18.5" rx="1.2" fill="#9c9c9c"/>
<rect x="677.8" y="371.5" width="5.4" height="3" fill="#d2d2d2" />
<rect x="684.3" y="329" width="7.2" height="29" fill="#1b1b1b" />
<rect x="685.5" y="331" width="4.8" height="25" rx="1.5" fill="#7c7c7c"/>
<rect x="685.5" y="334" width="4.8" height="4.5" fill="#c4c4c4" />
<rect x="687.3" y="359.5" width="5.4" height="18.5" rx="1.2" fill="#9c9c9c"/>
<rect x="687.3" y="371.5" width="5.4" height="3" fill="#d2d2d2" />
<rect x="693.7" y="329" width="7.2" height="29" fill="#1b1b1b" />
<rect x="694.9" y="331" width="4.8" height="25" rx="1.5" fill="#7c7c7c"/>
<rect x="694.9" y="334" width="4.8" height="4.5" fill="#c4c4c4" />
<rect x="696.7" y="359.5" width="5.4" height="18.5" rx="1.2" fill="#9c9c9c"/>
<rect x="696.7" y="371.5" width="5.4" height="3" fill="#d2d2d2" />
<rect x="703.2" y="329" width="7.2" height="29" fill="#1b1b1b" />
<rect x="704.4" y="331" width="4.8" height="25" rx="1.5" fill="#7c7c7c"/>
<rect x="704.4" y="334" width="4.8" height="4.5" fill="#c4c4c4" />
<rect x="706.2" y="359.5" width="5.4" height="18.5" rx="1.2" fill="#9c9c9c"/>
<rect x="706.2" y="371.5" width="5.4" height="3" fill="#d2d2d2" />
<rect x="712.6" y="329" width="7.2" height="29" fill="#1b1b1b" />
<rect x="713.8" y="331" width="4.8" height="25" rx="1.5" fill="#7c7c7c"/>
<rect x="713.8" y="334" width="4.8" height="4.5" fill="#c4c4c4" />
<rect x="715.6" y="359.5" width="5.4" height="18.5" rx="1.2" fill="#9c9c9c"/>
<rect x="715.6" y="371.5" width="5.4" height="3" fill="#d2d2d2" />
<rect x="531" y="384.2" width="46" height="7.2" fill="#161616" />
<rect x="532" y="386" width="45" height="3.6" rx="1.5" fill="url(#pinh)"/>
<rect x="531" y="393.6" width="46" height="7.2" fill="#161616" />
<rect x="532" y="395.4" width="45" height="3.6" rx="1.5" fill="url(#pinh)"/>
<rect x="531" y="403" width="46" height="7.2" fill="#161616" />
<rect x="532" y="404.8" width="45" height="3.6" rx="1.5" fill="url(#pinh)"/>
<rect x="531" y="412.3" width="46" height="7.2" fill="#161616" />
<rect x="532" y="414.1" width="45" height="3.6" rx="1.5" fill="url(#pinh)"/>
<rect x="531" y="421.7" width="46" height="7.2" fill="#161616" />
<rect x="532" y="423.5" width="45" height="3.6" rx="1.5" fill="url(#pinh)"/>
<rect x="531" y="431.1" width="46" height="7.2" fill="#161616" />
<rect x="532" y="432.9" width="45" height="3.6" rx="1.5" fill="url(#pinh)"/>
<rect x="531" y="440.5" width="46" height="7.2" fill="#161616" />
<rect x="532" y="442.3" width="45" height="3.6" rx="1.5" fill="url(#pinh)"/>
<rect x="531" y="449.9" width="46" height="7.2" fill="#161616" />
<rect x="532" y="451.7" width="45" height="3.6" rx="1.5" fill="url(#pinh)"/>
<rect x="531" y="459.2" width="46" height="7.2" fill="#161616" />
<rect x="532" y="461" width="45" height="3.6" rx="1.5" fill="url(#pinh)"/>
<rect x="531" y="468.6" width="46" height="7.2" fill="#161616" />
<rect x="532" y="470.4" width="45" height="3.6" rx="1.5" fill="url(#pinh)"/>
<rect x="531" y="478" width="46" height="7.2" fill="#161616" />
<rect x="532" y="479.8" width="45" height="3.6" rx="1.5" fill="url(#pinh)"/>
<rect x="531" y="487.4" width="46" height="7.2" fill="#161616" />
<rect x="532" y="489.2" width="45" height="3.6" rx="1.5" fill="url(#pinh)"/>
<rect x="531" y="496.8" width="46" height="7.2" fill="#161616" />
<rect x="532" y="498.6" width="45" height="3.6" rx="1.5" fill="url(#pinh)"/>
<rect x="531" y="506.1" width="46" height="7.2" fill="#161616" />
<rect x="532" y="507.9" width="45" height="3.6" rx="1.5" fill="url(#pinh)"/>
<rect x="531" y="515.5" width="46" height="7.2" fill="#161616" />
<rect x="532" y="517.3" width="45" height="3.6" rx="1.5" fill="url(#pinh)"/>
<rect x="531" y="524.9" width="46" height="7.2" fill="#161616" />
<rect x="532" y="526.7" width="45" height="3.6" rx="1.5" fill="url(#pinh)"/>
<rect x="531" y="534.3" width="46" height="7.2" fill="#161616" />
<rect x="532" y="536.1" width="45" height="3.6" rx="1.5" fill="url(#pinh)"/>
<rect x="531" y="543.7" width="46" height="7.2" fill="#161616" />
<rect x="532" y="545.5" width="45" height="3.6" rx="1.5" fill="url(#pinh)"/>
<rect x="531" y="553" width="46" height="7.2" fill="#161616" />
<rect x="532" y="554.8" width="45" height="3.6" rx="1.5" fill="url(#pinh)"/>
<rect x="531" y="562.4" width="46" height="7.2" fill="#161616" />
<rect x="532" y="564.2" width="45" height="3.6" rx="1.5" fill="url(#pinh)"/>
<rect x="563.5" y="384" width="2.5" height="186" fill="#8a8a8a" opacity="0.55"/>
<rect x="580.5" y="578.5" width="5" height="15.5" rx="2.3" fill="#bebebe"/>
<rect x="580.5" y="599" width="5" height="17" fill="#6e6e6e" />
<rect x="580.5" y="616.5" width="5" height="6" fill="#9a9a9a" />
<rect x="590" y="578.5" width="5" height="15.5" rx="2.3" fill="#bebebe"/>
<rect x="590" y="599" width="5" height="17" fill="#6e6e6e" />
<rect x="590" y="616.5" width="5" height="6" fill="#9a9a9a" />
<rect x="599.4" y="578.5" width="5" height="15.5" rx="2.3" fill="#bebebe"/>
<rect x="599.4" y="599" width="5" height="17" fill="#6e6e6e" />
<rect x="599.4" y="616.5" width="5" height="6" fill="#9a9a9a" />
<rect x="608.9" y="578.5" width="5" height="15.5" rx="2.3" fill="#bebebe"/>
<rect x="608.9" y="599" width="5" height="17" fill="#6e6e6e" />
<rect x="608.9" y="616.5" width="5" height="6" fill="#9a9a9a" />
<rect x="618.3" y="578.5" width="5" height="15.5" rx="2.3" fill="#bebebe"/>
<rect x="618.3" y="599" width="5" height="17" fill="#6e6e6e" />
<rect x="618.3" y="616.5" width="5" height="6" fill="#9a9a9a" />
<rect x="627.8" y="578.5" width="5" height="15.5" rx="2.3" fill="#bebebe"/>
<rect x="627.8" y="599" width="5" height="17" fill="#6e6e6e" />
<rect x="627.8" y="616.5" width="5" height="6" fill="#9a9a9a" />
<rect x="637.3" y="578.5" width="5" height="15.5" rx="2.3" fill="#bebebe"/>
<rect x="637.3" y="599" width="5" height="17" fill="#6e6e6e" />
<rect x="637.3" y="616.5" width="5" height="6" fill="#9a9a9a" />
<rect x="646.7" y="578.5" width="5" height="15.5" rx="2.3" fill="#bebebe"/>
<rect x="646.7" y="599" width="5" height="17" fill="#6e6e6e" />
<rect x="646.7" y="616.5" width="5" height="6" fill="#9a9a9a" />
<rect x="656.2" y="578.5" width="5" height="15.5" rx="2.3" fill="#bebebe"/>
<rect x="656.2" y="599" width="5" height="17" fill="#6e6e6e" />
<rect x="656.2" y="616.5" width="5" height="6" fill="#9a9a9a" />
<rect x="665.6" y="578.5" width="5" height="15.5" rx="2.3" fill="#bebebe"/>
<rect x="665.6" y="599" width="5" height="17" fill="#6e6e6e" />
<rect x="665.6" y="616.5" width="5" height="6" fill="#9a9a9a" />
<rect x="675.1" y="578.5" width="5" height="15.5" rx="2.3" fill="#bebebe"/>
<rect x="675.1" y="599" width="5" height="17" fill="#6e6e6e" />
<rect x="675.1" y="616.5" width="5" height="6" fill="#9a9a9a" />
<rect x="684.6" y="578.5" width="5" height="15.5" rx="2.3" fill="#bebebe"/>
<rect x="684.6" y="599" width="5" height="17" fill="#6e6e6e" />
<rect x="684.6" y="616.5" width="5" height="6" fill="#9a9a9a" />
<rect x="694" y="578.5" width="5" height="15.5" rx="2.3" fill="#bebebe"/>
<rect x="694" y="599" width="5" height="17" fill="#6e6e6e" />
<rect x="694" y="616.5" width="5" height="6" fill="#9a9a9a" />
<rect x="703.5" y="578.5" width="5" height="15.5" rx="2.3" fill="#bebebe"/>
<rect x="703.5" y="599" width="5" height="17" fill="#6e6e6e" />
<rect x="703.5" y="616.5" width="5" height="6" fill="#9a9a9a" />
<rect x="712.9" y="578.5" width="5" height="15.5" rx="2.3" fill="#bebebe"/>
<rect x="712.9" y="599" width="5" height="17" fill="#6e6e6e" />
<rect x="712.9" y="616.5" width="5" height="6" fill="#9a9a9a" />
<rect x="580" y="585.5" width="142" height="2" fill="#d8d8d8" opacity="0.5"/>
<polygon points="626,432.2 631.5,432.2 631.5,441.5 636.4,441.5 636.4,432.2 642.5,432.2 642.5,447.6 637.2,447.6 637.2,457 645.5,465.5 645.5,468.5 653,468.5 663.6,479.5 663.6,488 657.4,481.5 657.4,493.3 652.4,493.3 652.4,474.5 637.8,474.5 637.8,467 630.4,458.8 630.4,447.6 626,447.6" fill="#a0a0a0" />
<polygon points="701.2,432.2 695.7,432.2 695.7,441.5 690.8,441.5 690.8,432.2 684.7,432.2 684.7,447.6 690,447.6 690,457 681.7,465.5 681.7,468.5 674.2,468.5 663.6,479.5 663.6,488 669.8,481.5 669.8,493.3 674.8,493.3 674.8,474.5 689.4,474.5 689.4,467 696.8,458.8 696.8,447.6 701.2,447.6" fill="#a0a0a0" />
<path d="M654.6 459 V467.4 H669 V459" fill="none" stroke="#a0a0a0" stroke-width="1.5"/>
<circle cx="654.6" cy="458" r="2.4" fill="#a0a0a0" />
<circle cx="669" cy="458" r="2.4" fill="#a0a0a0" />
<path d="M637.5 476.8 H634.5 A16.2 16.2 0 0 0 618.3 493 V495.5" fill="none" stroke="#a0a0a0" stroke-width="1.8"/>
<path d="M637.5 476.8 H634.5 A16.2 16.2 0 0 0 618.3 493 V495.5" fill="none" stroke="#a0a0a0" stroke-width="1.8" transform="translate(1327.2,0) scale(-1,1)"/>
<path d="M637.5 481.2 H634.5 A11.5 11.5 0 0 0 623 492.7 V498" fill="none" stroke="#a0a0a0" stroke-width="1.8"/>
<path d="M637.5 481.2 H634.5 A11.5 11.5 0 0 0 623 492.7 V498" fill="none" stroke="#a0a0a0" stroke-width="1.8" transform="translate(1327.2,0) scale(-1,1)"/>
<path d="M637.5 485.6 H634.5 A6.5 6.5 0 0 0 628 492.1 V500.2" fill="none" stroke="#a0a0a0" stroke-width="1.8"/>
<path d="M637.5 485.6 H634.5 A6.5 6.5 0 0 0 628 492.1 V500.2" fill="none" stroke="#a0a0a0" stroke-width="1.8" transform="translate(1327.2,0) scale(-1,1)"/>
<path d="M637.5 490 H634.6 A2 2 0 0 0 632.6 492 V502.2" fill="none" stroke="#a0a0a0" stroke-width="1.8"/>
<path d="M637.5 490 H634.6 A2 2 0 0 0 632.6 492 V502.2" fill="none" stroke="#a0a0a0" stroke-width="1.8" transform="translate(1327.2,0) scale(-1,1)"/>
<rect x="67.2" y="526.8" width="34.8" height="75.5" rx="0" fill="none" stroke="#fafafa" stroke-width="2.2"/>
<rect x="107.8" y="526.8" width="35.4" height="75.5" rx="0" fill="none" stroke="#fafafa" stroke-width="2.2"/>
<rect x="150" y="526.8" width="36.5" height="75.5" rx="0" fill="none" stroke="#fafafa" stroke-width="2.2"/>
<rect x="70.5" y="530" width="28.5" height="69" fill="#1c1c1c" />
<rect x="73" y="531.5" width="23.5" height="12.5" fill="#5a5a5a" />
<rect x="75" y="534" width="20" height="3" fill="#9a9a9a" />
<rect x="80" y="544" width="7.5" height="36" fill="#6a6a6a" />
<rect x="81.5" y="546" width="2.5" height="32" fill="#b0b0b0" />
<rect x="73" y="577" width="23.5" height="20" fill="#484848" />
<rect x="75" y="579" width="20" height="4" fill="#8a8a8a" />
<polygon points="88,556 99,556 99,566 92,566" fill="#484848" />
<rect x="111" y="530" width="29.5" height="69" fill="#1a1a1a" />
<rect x="112" y="531" width="27.5" height="23" fill="#343434" />
<rect x="112" y="573" width="27.5" height="25" fill="#343434" />
<path d="M115 532 Q121 542.5 115 553 L118.5 553 Q124 542.5 118.5 532 Z" fill="#e2e2e2"/>
<path d="M136.5 532 Q130.5 542.5 136.5 553 L133 553 Q127.5 542.5 133 532 Z" fill="#e2e2e2"/>
<path d="M119 533 Q125.8 539 132.5 533 L130.5 532 L121 532 Z" fill="#bdbdbd"/>
<path d="M115 574.5 Q121 585.8 115 597 L118.5 597 Q124 585.8 118.5 574.5 Z" fill="#e2e2e2"/>
<path d="M136.5 574.5 Q130.5 585.8 136.5 597 L133 597 Q127.5 585.8 133 574.5 Z" fill="#e2e2e2"/>
<path d="M119 575.5 Q125.8 581.5 132.5 575.5 L130.5 574.5 L121 574.5 Z" fill="#bdbdbd"/>
<polygon points="111,558.5 140.5,558.5 140.5,562.5 129.8,569 121.8,569 111,562.5" fill="#e6e6e6" />
<polygon points="119,561 132.5,561 125.8,566.5" fill="#8a8a8a" />
<rect x="153.5" y="530" width="29.5" height="69" fill="#1a1a1a" />
<rect x="154.5" y="531" width="27.5" height="23" fill="#343434" />
<rect x="154.5" y="573" width="27.5" height="25" fill="#343434" />
<path d="M157.5 532 Q163.5 542.5 157.5 553 L161 553 Q166.5 542.5 161 532 Z" fill="#e2e2e2"/>
<path d="M179 532 Q173 542.5 179 553 L175.5 553 Q170 542.5 175.5 532 Z" fill="#e2e2e2"/>
<path d="M161.5 533 Q168.2 539 175 533 L173 532 L163.5 532 Z" fill="#bdbdbd"/>
<path d="M157.5 574.5 Q163.5 585.8 157.5 597 L161 597 Q166.5 585.8 161 574.5 Z" fill="#e2e2e2"/>
<path d="M179 574.5 Q173 585.8 179 597 L175.5 597 Q170 585.8 175.5 574.5 Z" fill="#e2e2e2"/>
<path d="M161.5 575.5 Q168.2 581.5 175 575.5 L173 574.5 L163.5 574.5 Z" fill="#bdbdbd"/>
<polygon points="153.5,558.5 183,558.5 183,562.5 172.2,569 164.2,569 153.5,562.5" fill="#e6e6e6" />
<polygon points="161.5,561 175,561 168.2,566.5" fill="#8a8a8a" />
<rect x="191.2" y="526.8" width="56.1" height="20.4" rx="10.2" ry="10.2" fill="none" stroke="#ececec" stroke-width="2"/>
<rect x="198" y="530.5" width="43" height="13" fill="#1b1b1b" />
<rect x="211.5" y="531.5" width="18" height="11" fill="#565656" />
<rect x="203" y="532" width="8" height="10" fill="#8a8a8a" />
<rect x="230" y="532" width="8.5" height="10" fill="#8a8a8a" />
<rect x="191.2" y="550.6" width="56.1" height="20.4" rx="10.2" ry="10.2" fill="none" stroke="#ececec" stroke-width="2"/>
<rect x="198" y="554.3" width="43" height="13" fill="#1b1b1b" />
<rect x="211.5" y="555.3" width="18" height="11" fill="#565656" />
<rect x="203" y="555.8" width="8" height="10" fill="#8a8a8a" />
<rect x="230" y="555.8" width="8.5" height="10" fill="#8a8a8a" />
<rect x="191.2" y="574.4" width="56.1" height="23.4" rx="11.7" ry="11.7" fill="none" stroke="#ececec" stroke-width="2"/>
<rect x="198" y="579.6" width="43" height="13" fill="#1b1b1b" />
<rect x="211.5" y="580.6" width="18" height="11" fill="#565656" />
<rect x="203" y="581.1" width="8" height="10" fill="#8a8a8a" />
<rect x="230" y="581.1" width="8.5" height="10" fill="#8a8a8a" />
<polygon points="233,533 240,537 233,541" fill="#f0f0f0" />
<circle cx="236.5" cy="537" r="2.2" fill="#f4f4f4" />
<polygon points="208,556.5 201,560.8 208,565" fill="#f0f0f0" />
<circle cx="204.5" cy="560.8" r="2.2" fill="#f4f4f4" />
<circle cx="238.5" cy="560.8" r="1.6" fill="#ccc" />
<polygon points="208,581.5 201,586 208,590.5" fill="#f0f0f0" />
<circle cx="204.5" cy="586" r="2.4" fill="#f4f4f4" />
<circle cx="238.5" cy="586" r="1.6" fill="#bbb" />
<rect x="270" y="543" width="23.5" height="49" fill="#222" />
<rect x="272.7" y="545.5" width="18.8" height="44.5" fill="#141414" />
<rect x="291.5" y="556" width="13" height="22" fill="#1a1a1a" />
<circle cx="297" cy="560" r="3.5" fill="#3a3a3a" />
<rect x="262" y="547" width="11" height="8" fill="#3a3a3a" />
<polygon points="262,545.5 269.5,551 262,556.5" fill="#f4f4f4" />
<rect x="262" y="576" width="11" height="8" fill="#3a3a3a" />
<rect x="262.5" y="576.5" width="2.5" height="7.5" fill="#e8e8e8" />
<rect x="268" y="578.5" width="3.5" height="4" fill="#cfcfcf" />
<rect x="310.6" y="542.6" width="21.4" height="57.4" rx="10.7" ry="10.7" fill="none" stroke="#e0e0e0" stroke-width="2"/>
<rect x="315.5" y="549" width="12" height="45" fill="#1b1b1b" />
<rect x="317" y="562.5" width="9.5" height="16" fill="#5a5a5a" />
<rect x="319" y="566" width="5.5" height="8.5" fill="#333" />
<rect x="317" y="557.5" width="9.5" height="5" fill="#777" />
<rect x="317" y="578.5" width="9.5" height="4.5" fill="#6a6a6a" />
<circle cx="318" cy="552.5" r="1.3" fill="#ddd" />
<circle cx="321.5" cy="549.5" r="1.3" fill="#eee" />
<circle cx="321" cy="544" r="2.2" fill="#0a0a0a" />
<rect x="412.2" y="580" width="21.6" height="58.6" rx="10.8" ry="10.8" fill="none" stroke="#e8e8e8" stroke-width="2.4"/>
<rect x="416.5" y="598" width="12" height="34" fill="#1b1b1b" />
<rect x="417.5" y="603" width="10" height="16" fill="#585858" />
<rect x="419.5" y="606" width="6" height="10" fill="#333" />
<rect x="417.5" y="619" width="10" height="4.5" fill="#808080" />
<circle cx="418" cy="628.5" r="1.2" fill="#ddd" />
<circle cx="427.5" cy="628.5" r="1.2" fill="#ddd" />
<polyline points="427,592 430,588" fill="none" stroke="#ddd" stroke-width="1.5" />
<ellipse cx="388" cy="566" rx="44" ry="42.5" fill="url(#canside)"/>
<path d="M353 548 A44 44 0 0 1 372 529 L380 540 A32 32 0 0 0 366 556 Z" fill="#1a1a1a"/>
<polygon points="372,529 377,526 407,526 412,529 404,542 380,542" fill="#4e4e4e" />
<path d="M385 542 v-8 a4.5 4.5 0 0 1 9 0 v8" stroke="#141414" stroke-width="3" fill="none"/>
<circle cx="390.7" cy="567.5" r="30.5" fill="#161616" />
<circle cx="390.7" cy="567.3" r="29.5" fill="url(#capg)" />
<circle cx="390.7" cy="567.3" r="29" fill="#fff" filter="url(#mottle)" opacity="0.45"/>
<polyline points="381,590 399,545" fill="none" stroke="#b4b4b4" stroke-width="1.2" opacity="0.5"/>
<rect x="246" y="615" width="105" height="59.2" rx="0" fill="none" stroke="#fafafa" stroke-width="2.3"/>
<rect x="250" y="619" width="97" height="51" fill="#1c1c1c" />
<rect x="252" y="621" width="93" height="47" fill="#262626" />
<path d="M262 628 Q252 643 262 660" stroke="#d8d8d8" stroke-width="3" fill="none"/>
<rect x="254" y="622" width="26" height="6" fill="#4a4a4a" />
<rect x="318" y="621" width="25" height="6" fill="#4a4a4a" />
<rect x="266.7" y="625.7" width="55.6" height="35.8" fill="#0f0f0f" />
<rect x="322.3" y="625.7" width="10.9" height="32.3" fill="#5a5a5a" />
<rect x="337" y="629" width="6" height="28" fill="#c8c8c8" />
<rect x="339" y="627" width="3" height="34" fill="#eee" />
<rect x="306" y="664" width="3" height="4.5" fill="#bbb" />
<rect x="316" y="663.5" width="24" height="2" fill="#666" />
<path d="M127 659 L87.9 653.5 A39.5 39.5 0 0 0 108.5 693.9 Z" fill="#c2c2c2"/>
<path d="M91.5 645.4 A38 38 0 0 1 164.4 665.6" stroke="#fafafa" stroke-width="3" fill="none"/>
<ellipse cx="131" cy="664" rx="32" ry="39" fill="#0e0e0e"/>
<path d="M101 652 A31 28 0 0 1 161 652 A30 20 0 0 0 101 652 Z" fill="#2c2c2c"/>
<path d="M104 662 A28 26 0 0 1 159 660" stroke="#2a2a2a" stroke-width="3" fill="none"/>
<path d="M112 672 A22 22 0 0 1 124 654" stroke="#3a3a3a" stroke-width="1.5" fill="none"/>
<polygon points="129.5,690 147,688 150,703 127,705" fill="#4c4c4c" />
<polygon points="122,694 130,690 127.5,704 120,700" fill="#0e0e0e" />
<circle cx="135" cy="674.5" r="18" fill="url(#cap2)" />
<circle cx="135" cy="674.5" r="15" fill="#fff" filter="url(#mottle2)" opacity="0.4"/>
<polyline points="60,666.5 86.8,666.5 86.8,645.5" fill="none" stroke="#d8d8d8" stroke-width="2.2" />
<rect x="62" y="647" width="22" height="17" fill="#1c1c1c" />
<rect x="64" y="650" width="14" height="11" fill="#4a4a4a" />
<rect x="596.2" y="645" width="53.4" height="22.5" rx="0" fill="none" stroke="#fafafa" stroke-width="2.5"/>
<rect x="599" y="648" width="48" height="16.5" fill="#1a1a1a" />
<rect x="603" y="650" width="3" height="11" fill="#e0e0e0" />
<rect x="611" y="651" width="7" height="10" fill="#7a7a7a" />
<rect x="628" y="651" width="6" height="10" fill="#7a7a7a" />
<rect x="640" y="650" width="3" height="11" fill="#e0e0e0" />
<circle cx="596" cy="664.5" r="2.8" fill="#050505" />
<path d="M68.1 734 V721.6 Q68.1 715.6 71.9 714.1 V705.1 H75.9 V714.1 Q79.7 715.6 79.7 721.6 V734 Z" fill="#242424"/>
<path d="M68.1 734 V721.6 Q68.1 715.6 71.9 714.1 M75.9 714.1 Q79.7 715.6 79.7 721.6 V734" fill="none" stroke="#c2c2c2" stroke-width="1.5"/>
<path d="M86.9 734 V721.8 Q86.9 715.8 90.7 714.3 V705.3 H94.7 V714.3 Q98.5 715.8 98.5 721.8 V734 Z" fill="#242424"/>
<path d="M86.9 734 V721.8 Q86.9 715.8 90.7 714.3 M94.7 714.3 Q98.5 715.8 98.5 721.8 V734" fill="none" stroke="#c2c2c2" stroke-width="1.5"/>
<path d="M105.4 734 V722 Q105.4 716 109.2 714.5 V705.5 H113.2 V714.5 Q117 716 117 722 V734 Z" fill="#242424"/>
<path d="M105.4 734 V722 Q105.4 716 109.2 714.5 M113.2 714.5 Q117 716 117 722 V734" fill="none" stroke="#c2c2c2" stroke-width="1.5"/>
<path d="M161.3 734 V722.5 Q161.3 716.5 165.1 715 V706 H169.1 V715 Q172.9 716.5 172.9 722.5 V734 Z" fill="#242424"/>
<path d="M161.3 734 V722.5 Q161.3 716.5 165.1 715 M169.1 715 Q172.9 716.5 172.9 722.5 V734" fill="none" stroke="#c2c2c2" stroke-width="1.5"/>
<path d="M198 734 V722.9 Q198 716.9 201.8 715.4 V706.4 H205.8 V715.4 Q209.6 716.9 209.6 722.9 V734 Z" fill="#242424"/>
<path d="M198 734 V722.9 Q198 716.9 201.8 715.4 M205.8 715.4 Q209.6 716.9 209.6 722.9 V734" fill="none" stroke="#c2c2c2" stroke-width="1.5"/>
<path d="M271.8 734 V723.6 Q271.8 717.6 275.6 716.1 V707.1 H279.6 V716.1 Q283.4 717.6 283.4 723.6 V734 Z" fill="#242424"/>
<path d="M271.8 734 V723.6 Q271.8 717.6 275.6 716.1 M279.6 716.1 Q283.4 717.6 283.4 723.6 V734" fill="none" stroke="#c2c2c2" stroke-width="1.5"/>
<path d="M290.7 734 V723.7 Q290.7 717.7 294.5 716.2 V707.2 H298.5 V716.2 Q302.3 717.7 302.3 723.7 V734 Z" fill="#242424"/>
<path d="M290.7 734 V723.7 Q290.7 717.7 294.5 716.2 M298.5 716.2 Q302.3 717.7 302.3 723.7 V734" fill="none" stroke="#c2c2c2" stroke-width="1.5"/>
<path d="M308.5 734 V723.9 Q308.5 717.9 312.3 716.4 V707.4 H316.3 V716.4 Q320.1 717.9 320.1 723.9 V734 Z" fill="#242424"/>
<path d="M308.5 734 V723.9 Q308.5 717.9 312.3 716.4 M316.3 716.4 Q320.1 717.9 320.1 723.9 V734" fill="none" stroke="#c2c2c2" stroke-width="1.5"/>
<path d="M327.4 734 V724.1 Q327.4 718.1 331.2 716.6 V707.6 H335.2 V716.6 Q339 718.1 339 724.1 V734 Z" fill="#242424"/>
<path d="M327.4 734 V724.1 Q327.4 718.1 331.2 716.6 M335.2 716.6 Q339 718.1 339 724.1 V734" fill="none" stroke="#c2c2c2" stroke-width="1.5"/>
<path d="M364.1 734 V724.4 Q364.1 718.4 367.9 716.9 V707.9 H371.9 V716.9 Q375.7 718.4 375.7 724.4 V734 Z" fill="#242424"/>
<path d="M364.1 734 V724.4 Q364.1 718.4 367.9 716.9 M371.9 716.9 Q375.7 718.4 375.7 724.4 V734" fill="none" stroke="#c2c2c2" stroke-width="1.5"/>
<path d="M381.9 734 V724.6 Q381.9 718.6 385.7 717.1 V708.1 H389.7 V717.1 Q393.5 718.6 393.5 724.6 V734 Z" fill="#242424"/>
<path d="M381.9 734 V724.6 Q381.9 718.6 385.7 717.1 M389.7 717.1 Q393.5 718.6 393.5 724.6 V734" fill="none" stroke="#c2c2c2" stroke-width="1.5"/>
<path d="M400.8 734 V724.8 Q400.8 718.8 404.6 717.3 V708.3 H408.6 V717.3 Q412.4 718.8 412.4 724.8 V734 Z" fill="#242424"/>
<path d="M400.8 734 V724.8 Q400.8 718.8 404.6 717.3 M408.6 717.3 Q412.4 718.8 412.4 724.8 V734" fill="none" stroke="#c2c2c2" stroke-width="1.5"/>
<path d="M419.6 734 V725 Q419.6 719 423.4 717.5 V708.5 H427.4 V717.5 Q431.2 719 431.2 725 V734 Z" fill="#242424"/>
<path d="M419.6 734 V725 Q419.6 719 423.4 717.5 M427.4 717.5 Q431.2 719 431.2 725 V734" fill="none" stroke="#c2c2c2" stroke-width="1.5"/>
<path d="M437.9 734 V725.1 Q437.9 719.1 441.7 717.6 V708.6 H445.7 V717.6 Q449.5 719.1 449.5 725.1 V734 Z" fill="#242424"/>
<path d="M437.9 734 V725.1 Q437.9 719.1 441.7 717.6 M445.7 717.6 Q449.5 719.1 449.5 725.1 V734" fill="none" stroke="#c2c2c2" stroke-width="1.5"/>
<path d="M475.2 734 V725.5 Q475.2 719.5 479 718 V709 H483 V718 Q486.8 719.5 486.8 725.5 V734 Z" fill="#242424"/>
<path d="M475.2 734 V725.5 Q475.2 719.5 479 718 M483 718 Q486.8 719.5 486.8 725.5 V734" fill="none" stroke="#c2c2c2" stroke-width="1.5"/>
<path d="M492.8 734 V725.7 Q492.8 719.7 496.6 718.2 V709.2 H500.6 V718.2 Q504.4 719.7 504.4 725.7 V734 Z" fill="#242424"/>
<path d="M492.8 734 V725.7 Q492.8 719.7 496.6 718.2 M500.6 718.2 Q504.4 719.7 504.4 725.7 V734" fill="none" stroke="#c2c2c2" stroke-width="1.5"/>
<path d="M511.2 734 V725.8 Q511.2 719.8 515 718.3 V709.3 H519 V718.3 Q522.8 719.8 522.8 725.8 V734 Z" fill="#242424"/>
<path d="M511.2 734 V725.8 Q511.2 719.8 515 718.3 M519 718.3 Q522.8 719.8 522.8 725.8 V734" fill="none" stroke="#c2c2c2" stroke-width="1.5"/>
<path d="M529.7 734 V726 Q529.7 720 533.5 718.5 V709.5 H537.5 V718.5 Q541.3 720 541.3 726 V734 Z" fill="#242424"/>
<path d="M529.7 734 V726 Q529.7 720 533.5 718.5 M537.5 718.5 Q541.3 720 541.3 726 V734" fill="none" stroke="#c2c2c2" stroke-width="1.5"/>
<path d="M548 734 V726.2 Q548 720.2 551.8 718.7 V709.7 H555.8 V718.7 Q559.6 720.2 559.6 726.2 V734 Z" fill="#242424"/>
<path d="M548 734 V726.2 Q548 720.2 551.8 718.7 M555.8 718.7 Q559.6 720.2 559.6 726.2 V734" fill="none" stroke="#c2c2c2" stroke-width="1.5"/>
<path d="M584.6 734 V726.5 Q584.6 720.5 588.4 719 V710 H592.4 V719 Q596.2 720.5 596.2 726.5 V734 Z" fill="#242424"/>
<path d="M584.6 734 V726.5 Q584.6 720.5 588.4 719 M592.4 719 Q596.2 720.5 596.2 726.5 V734" fill="none" stroke="#c2c2c2" stroke-width="1.5"/>
<path d="M603 734 V726.7 Q603 720.7 606.8 719.2 V710.2 H610.8 V719.2 Q614.6 720.7 614.6 726.7 V734 Z" fill="#242424"/>
<path d="M603 734 V726.7 Q603 720.7 606.8 719.2 M610.8 719.2 Q614.6 720.7 614.6 726.7 V734" fill="none" stroke="#c2c2c2" stroke-width="1.5"/>
<path d="M621.2 734 V726.9 Q621.2 720.9 625 719.4 V710.4 H629 V719.4 Q632.8 720.9 632.8 726.9 V734 Z" fill="#242424"/>
<path d="M621.2 734 V726.9 Q621.2 720.9 625 719.4 M629 719.4 Q632.8 720.9 632.8 726.9 V734" fill="none" stroke="#c2c2c2" stroke-width="1.5"/>
<path d="M640.2 734 V727.1 Q640.2 721.1 644 719.6 V710.6 H648 V719.6 Q651.8 721.1 651.8 727.1 V734 Z" fill="#242424"/>
<path d="M640.2 734 V727.1 Q640.2 721.1 644 719.6 M648 719.6 Q651.8 721.1 651.8 727.1 V734" fill="none" stroke="#c2c2c2" stroke-width="1.5"/>
<path d="M677.2 734 V727.4 Q677.2 721.4 681 719.9 V710.9 H685 V719.9 Q688.8 721.4 688.8 727.4 V734 Z" fill="#242424"/>
<path d="M677.2 734 V727.4 Q677.2 721.4 681 719.9 M685 719.9 Q688.8 721.4 688.8 727.4 V734" fill="none" stroke="#c2c2c2" stroke-width="1.5"/>
<path d="M695.2 734 V727.6 Q695.2 721.6 699 720.1 V711.1 H703 V720.1 Q706.8 721.6 706.8 727.6 V734 Z" fill="#242424"/>
<path d="M695.2 734 V727.6 Q695.2 721.6 699 720.1 M703 720.1 Q706.8 721.6 706.8 727.6 V734" fill="none" stroke="#c2c2c2" stroke-width="1.5"/>
<rect x="237.5" y="328" width="24" height="12.5" fill="#fafafa" opacity="0.5"/>
<rect x="357" y="371.5" width="28" height="12.5" fill="#fafafa" opacity="0.5"/>
<rect x="275.5" y="416.4" width="24" height="11.8" fill="#fafafa" opacity="0.5"/>
<rect x="487.5" y="254.4" width="20" height="10.5" fill="#fafafa" opacity="0.5"/>
<rect x="546" y="254.4" width="20" height="10.5" fill="#fafafa" opacity="0.5"/>
<rect x="650" y="257.2" width="20" height="10.2" fill="#fafafa" opacity="0.5"/>
<rect x="702" y="257.2" width="20" height="10.2" fill="#fafafa" opacity="0.5"/>
<rect x="454" y="431.5" width="52" height="12.5" fill="#fafafa" opacity="0.5"/>
<rect x="418.5" y="483.6" width="33" height="12" fill="#fafafa" opacity="0.5"/>
<rect x="72.5" y="506" width="24.5" height="11.2" fill="#fafafa" opacity="0.5"/>
<rect x="113.8" y="506" width="24" height="11.2" fill="#fafafa" opacity="0.5"/>
<rect x="156.5" y="506" width="25.5" height="11.2" fill="#fafafa" opacity="0.5"/>
<rect x="199.5" y="603.6" width="38" height="12" fill="#fafafa" opacity="0.5"/>
<rect x="199.5" y="625.1" width="38" height="12" fill="#fafafa" opacity="0.5"/>
<rect x="199.5" y="646.1" width="33.5" height="12" fill="#fafafa" opacity="0.5"/>
<rect x="60.5" y="626" width="20.5" height="11.2" fill="#fafafa" opacity="0.5"/>
<rect x="168" y="669.5" width="40" height="12.5" fill="#fafafa" opacity="0.5"/>
<rect x="262.7" y="523.1" width="25" height="12" fill="#fafafa" opacity="0.5"/>
<rect x="304.5" y="523.1" width="38" height="12" fill="#fafafa" opacity="0.5"/>
<rect x="357" y="633.5" width="24" height="12.5" fill="#fafafa" opacity="0.5"/>
<rect x="435.7" y="620.8" width="32" height="12.5" fill="#fafafa" opacity="0.5"/>
<rect x="631" y="673.8" width="23.5" height="12.2" fill="#fafafa" opacity="0.5"/>
<rect x="435.5" y="541.3" width="18.5" height="12" fill="#bdbdbd" opacity="0.5"/>
<rect x="711.5" y="437.7" width="15" height="19" fill="#7c7c7c" opacity="0.5"/>
<rect x="639.7" y="480.4" width="11" height="10.8" fill="#a0a0a0" opacity="0.5"/>
<rect x="675" y="480.4" width="11" height="10.8" fill="#a0a0a0" opacity="0.5"/></symbol></svg>
<svg class="abs" style="left:14px;top:72px" width="50" height="36"><use href="#th" width="50" height="36"/></svg>
<svg class="abs" style="left:74px;top:72px" width="50" height="36"><use href="#th" width="50" height="36"/></svg>
<svg class="abs" style="left:134px;top:72px" width="50" height="36"><use href="#th" width="50" height="36"/></svg>
<div class="abs" style="left:74px;top:65px;width:21px;height:21px;box-sizing:border-box;border:1px solid #000;background:rgba(255,255,255,0.84);"></div>
<div class="abs" style="left:134px;top:65px;width:21px;height:21px;box-sizing:border-box;border:1px solid #000;background:rgba(255,255,255,0.84);"></div>
<svg class="abs" style="left:78px;top:68px" width="13" height="13" viewBox="0 0 13 13"><path d="M5.5 1 H7.5 V5.2 H9.8 L6.5 9 L3.2 5.2 H5.5 Z" fill="#4c9a1e"/><rect x="1.4" y="10.2" width="10.2" height="1.6" fill="#3f8a16"/></svg>
<svg class="abs" style="left:138px;top:67px" width="13" height="14" viewBox="0 0 13 14"><rect x="1.4" y="1" width="10.2" height="2.2" fill="#2f86bf"/><path d="M5.2 3.2 H7.8 V8 H10.2 L6.5 12.4 L2.8 8 H5.2 Z" fill="#49a7dc"/></svg>
<span class="lbl" style="left:192px;top:84px;font-size:12px;letter-spacing:0.25px;">No image</span>

<!-- info row -->
<svg class="abs" style="left:6px;top:136px" width="23" height="23" viewBox="0 0 23 23">
  <defs><linearGradient id="ig" x1="0" y1="0" x2="1" y2="1"><stop offset="0" stop-color="#5c82e0"/><stop offset="0.42" stop-color="#3c60cc"/><stop offset="0.46" stop-color="#2a49b4"/><stop offset="1" stop-color="#2440b8"/></linearGradient>
  <linearGradient id="ist" x1="0" y1="0" x2="0" y2="1"><stop offset="0" stop-color="#fff"/><stop offset="0.5" stop-color="#c8c8c8"/><stop offset="1" stop-color="#fff"/></linearGradient></defs>
  <circle cx="11.5" cy="11.4" r="10.7" fill="url(#ig)" stroke="#d4cfc4" stroke-width="0.7"/>
  <circle cx="11.5" cy="5.5" r="1.7" fill="#fff"/><rect x="9.9" y="8.2" width="3.2" height="10.6" fill="url(#ist)"/>
</svg>
<span class="lbl" style="left:36.5px;top:141px;font-size:13px;font-weight:bold;letter-spacing:0.27px;">Select a template rectangle. It should be small, but unique.</span>
<div class="sep" style="left:1px;top:168px;width:1006px;height:1px;"></div>

<!-- toolbar -->
<div class="sep" style="left:120px;top:175px;width:1px;height:31px;background:#c5c5c5"></div>
<div class="sep" style="left:155px;top:175px;width:1px;height:31px;background:#c5c5c5"></div>
<div class="sep" style="left:358px;top:175px;width:1px;height:31px;background:#c5c5c5"></div>
<svg class="abs" style="left:68px;top:183px" width="16" height="15" viewBox="0 0 16 15"><path d="M0.7 1 V8.6 H8 L5.4 6 C8.6 4.6 11.4 7 11.8 14 C16.4 7 13 0.6 6.6 1.2 C4.8 1.4 3.6 2.2 2.8 3 Z" fill="#a3a3a3"/></svg>
<svg class="abs" style="left:95px;top:183px" width="16" height="15" viewBox="0 0 16 15"><g transform="translate(16,0) scale(-1,1)"><path d="M0.7 1 V8.6 H8 L5.4 6 C8.6 4.6 11.4 7 11.8 14 C16.4 7 13 0.6 6.6 1.2 C4.8 1.4 3.6 2.2 2.8 3 Z" fill="#a3a3a3"/></g></svg>
<svg class="abs" style="left:131px;top:181px" width="13" height="17" viewBox="0 0 13 17"><rect x="4.5" y="0.8" width="4" height="2" rx="0.8" fill="none" stroke="#111" stroke-width="1.2"/><rect x="0.8" y="2.6" width="11.4" height="2.4" rx="0.8" fill="#111"/><path d="M1.8 5.6 H11.2 L10.6 15 Q10.5 16.2 9.4 16.2 H3.6 Q2.5 16.2 2.4 15 Z" fill="#111"/><path d="M4.3 7 V14.6 M6.5 7 V14.6 M8.7 7 V14.6" stroke="#8a8a8a" stroke-width="0.9"/></svg>
<svg class="abs" style="left:305px;top:182px" width="16" height="16" viewBox="0 0 16 16"><rect x="0.5" y="0.5" width="15" height="15" fill="#f2f2f2" stroke="#3a8ee0" stroke-width="1"/><path d="M0 15.5 H16 M15.5 0 V16" stroke="#1f5f9e" stroke-width="1"/><rect x="0" y="0" width="16" height="2" fill="#3c9bea"/><path d="M2 3 h2.4 l-2.4 2.4z M14 3 h-2.4 l2.4 2.4z M2 14 h2.4 l-2.4 -2.4z M14 14 h-2.4 l2.4 -2.4z" fill="#2a50d8"/><rect x="4.5" y="5.5" width="7" height="5.6" fill="#c4c4c4" stroke="#7a7a7a" stroke-width="1"/><path d="M6.4 9.4 h3.2 l-1.6 -2z" fill="#111"/></svg>
<svg class="abs" style="left:332px;top:182px" width="16" height="16" viewBox="0 0 16 16"><rect x="0.5" y="0.5" width="15" height="15" fill="#f2f2f2" stroke="#3a8ee0" stroke-width="1"/><path d="M0 15.5 H16 M15.5 0 V16" stroke="#1f5f9e" stroke-width="1"/><rect x="0" y="0" width="16" height="2" fill="#3c9bea"/><path d="M2 3 h2.4 l-2.4 2.4z M14 3 h-2.4 l2.4 2.4z M2 14 h2.4 l-2.4 -2.4z M14 14 h-2.4 l2.4 -2.4z" fill="#2a50d8"/><rect x="3.5" y="4.5" width="6.4" height="5.2" fill="#c4c4c4" stroke="#7a7a7a" stroke-width="1"/><path d="M5.2 8 h3 l-1.5 -1.8z" fill="#111"/><path d="M6.4 12 V10.4 H8.4 V8.6 H10.6 V10.4 H12.8 V12 Z" fill="#00008b"/></svg>
<span class="lbl" style="left:164px;top:183px;font-size:12px;">Scale:</span>
<div class="abs" style="left:203px;top:178px;width:95px;height:24px;background:#fff;"></div><div class="abs" style="left:285px;top:179px;width:12px;height:22px;background:#f7f7f7;"></div>
<span class="lbl" style="left:206px;top:182px;font-size:12px;letter-spacing:-0.4px;">100 %</span>
<svg class="abs" style="left:288px;top:189px" width="7" height="4"><path d="M0.6 0H6.4L3.5 3.4Z" fill="#000"/></svg>
<span class="lbl" style="left:364.5px;top:184px;font-size:12px;letter-spacing:0px;">Load Image...</span>

<!-- left tools -->
<div class="tool" style="left:15px;top:223px;width:27px;height:27px;background:#cce4f7;border-color:#005499;"></div>
<div class="tool" style="left:14px;top:258px;width:27px;height:27px;border-color:#c2c2c2;"></div>
<div class="tool" style="left:14px;top:293px;width:27px;height:27px;border-color:#c2c2c2;"></div>
<div class="tool" style="left:14px;top:341px;width:27px;height:27px;border-color:#c2c2c2;"></div>

<svg class="abs" style="left:23px;top:229px" width="11" height="16" viewBox="0 0 11 16"><path d="M0.6 0.6 V12.4 L3.4 9.8 L5.6 14.8 L7.6 13.9 L5.4 9 H9.2 Z" fill="#3a3a3a" stroke="#222" stroke-width="0.6"/></svg>
<svg class="abs" style="left:18px;top:263px" width="18" height="18" viewBox="0 0 18 18"><path d="M5.2 9.4 V3.6 Q5.2 2.4 6.3 2.4 Q7.3 2.4 7.3 3.6 V2.6 Q7.3 1.3 8.4 1.3 Q9.5 1.3 9.5 2.6 V3.2 Q9.5 2 10.6 2 Q11.7 2 11.7 3.2 V4.4 Q11.7 3.4 12.7 3.4 Q13.8 3.4 13.8 4.6 V10.4 Q13.8 13.4 12.4 15.8 H6.4 Q5.6 14 3.6 12 Q1.6 10 1.8 9 Q2.4 7.8 3.8 8.6 Z" fill="#fff" stroke="#111" stroke-width="1"/><path d="M7.3 3.6 V8 M9.5 3.2 V8 M11.7 4.4 V8.2" stroke="#111" stroke-width="0.8"/></svg>
<svg class="abs" style="left:18px;top:297px" width="18" height="18" viewBox="0 0 18 18"><circle cx="6.4" cy="6" r="4.2" fill="#e8f0fa" stroke="#222" stroke-width="1.3"/><path d="M9.4 9 L15 14.6" stroke="#111" stroke-width="2.4" stroke-linecap="round"/></svg>
<div class="abs" style="left:20px;top:349px;width:13px;height:9px;background:#7ab2f0;border:1px solid #111;"></div>
<!-- canvas frame -->
<div class="abs" style="left:54px;top:211px;width:673px;height:548px;box-sizing:border-box;border:1px solid #f8f8f8;"></div>
<div class="abs" style="left:55px;top:212px;width:671px;height:546px;box-sizing:border-box;border:1px solid #696969;background:#f0f0f0;"></div>
<div class="abs" style="left:56px;top:213px;width:669px;height:544px;box-sizing:border-box;border:1px solid #fff;"></div>
<div class="abs" style="left:59px;top:216px;width:663px;height:538px;box-sizing:border-box;border:1px solid #fff;"></div>
<div class="abs" id="cv" style="left:60px;top:217px;width:661px;height:536px;background:#000;overflow:hidden;"><!--PCB--><svg width="661" height="536" viewBox="60 217 661 536" style="position:absolute;left:0;top:0;display:block" font-family='"Liberation Sans", sans-serif'>
<defs>
<radialGradient id="pg" cx="0.5" cy="0.5" r="0.5"><stop offset="0" stop-color="#5a5a5a"/><stop offset="0.7" stop-color="#686868"/><stop offset="0.9" stop-color="#8e8e8e"/><stop offset="1" stop-color="#4a4a4a"/></radialGradient>
<radialGradient id="pgb" cx="0.5" cy="0.5" r="0.5"><stop offset="0" stop-color="#5a5a5a"/><stop offset="0.5" stop-color="#707070"/><stop offset="0.8" stop-color="#cfcfcf"/><stop offset="0.92" stop-color="#ededed"/><stop offset="1" stop-color="#7a7a7a"/></radialGradient>
<radialGradient id="pgd" cx="0.5" cy="0.5" r="0.5"><stop offset="0" stop-color="#555"/><stop offset="0.8" stop-color="#5e5e5e"/><stop offset="1" stop-color="#777"/></radialGradient>
<radialGradient id="capg" cx="0.45" cy="0.45" r="0.55"><stop offset="0" stop-color="#9e9e9e"/><stop offset="0.8" stop-color="#909090"/><stop offset="1" stop-color="#6c6c6c"/></radialGradient>
<radialGradient id="cap2" cx="0.5" cy="0.5" r="0.5"><stop offset="0" stop-color="#8c8c8c"/><stop offset="0.7" stop-color="#7c7c7c"/><stop offset="1" stop-color="#4a4a4a"/></radialGradient>
<linearGradient id="canside" x1="0" y1="0" x2="1" y2="0"><stop offset="0" stop-color="#1b1b1b"/><stop offset="0.3" stop-color="#121212"/><stop offset="0.5" stop-color="#0a0a0a"/><stop offset="1" stop-color="#0a0a0a"/></linearGradient>
<filter id="mottle" x="355" y="530" width="75" height="75" filterUnits="userSpaceOnUse"><feTurbulence type="fractalNoise" baseFrequency="0.22" numOctaves="3" seed="11"/><feColorMatrix type="matrix" values="0 0 0 0 1  0 0 0 0 1  0 0 0 0 1  1.6 0 0 0 -0.62"/><feComposite operator="in" in2="SourceGraphic"/></filter>
<filter id="mottle2" x="110" y="650" width="50" height="50" filterUnits="userSpaceOnUse"><feTurbulence type="fractalNoise" baseFrequency="0.2" numOctaves="2" seed="5"/><feColorMatrix type="matrix" values="0 0 0 0 1  0 0 0 0 1  0 0 0 0 1  1.6 0 0 0 -0.6"/><feComposite operator="in" in2="SourceGraphic"/></filter>
<linearGradient id="pinv" x1="0" y1="0" x2="0" y2="1"><stop offset="0" stop-color="#d8d8d8"/><stop offset="0.28" stop-color="#b0b0b0"/><stop offset="0.4" stop-color="#5a5a5a"/><stop offset="0.55" stop-color="#b8b8b8"/><stop offset="0.75" stop-color="#707070"/><stop offset="1" stop-color="#5a5a5a"/></linearGradient>
<linearGradient id="pinv2" x1="0" y1="1" x2="0" y2="0"><stop offset="0" stop-color="#505050"/><stop offset="0.3" stop-color="#6a6a6a"/><stop offset="0.5" stop-color="#c8c8c8"/><stop offset="0.7" stop-color="#707070"/><stop offset="1" stop-color="#5a5a5a"/></linearGradient>
<linearGradient id="pinh" x1="0" y1="0" x2="1" y2="0"><stop offset="0" stop-color="#9a9a9a"/><stop offset="0.12" stop-color="#d0d0d0"/><stop offset="0.25" stop-color="#7a7a7a"/><stop offset="0.65" stop-color="#6a6a6a"/><stop offset="0.75" stop-color="#9a9a9a"/><stop offset="1" stop-color="#4a4a4a"/></linearGradient>
<linearGradient id="bandg" x1="0" y1="0" x2="1" y2="0"><stop offset="0" stop-color="#4a4a4a"/><stop offset="0.35" stop-color="#5a5a5a"/><stop offset="0.62" stop-color="#3c3c3c"/><stop offset="0.85" stop-color="#4e4e4e"/><stop offset="1" stop-color="#555"/></linearGradient>
<filter id="soft" x="55" y="210" width="675" height="550" filterUnits="userSpaceOnUse"><feGaussianBlur stdDeviation="0.55"/></filter>
<filter id="noise" x="55" y="210" width="675" height="550" filterUnits="userSpaceOnUse"><feTurbulence type="fractalNoise" baseFrequency="0.65" numOctaves="2" seed="3" result="n"/><feColorMatrix type="matrix" values="0 0 0 0 1  0 0 0 0 1  0 0 0 0 1  0.26 0 0 0 -0.105"/></filter>
<clipPath id="imgclip"><rect x="61" y="239" width="660" height="493.5"/></clipPath>
<clipPath id="c17clip"><path d="M401 388 A46.8 46.8 0 0 1 401 481.6 Z"/></clipPath>
<clipPath id="selclip"><rect x="338" y="376" width="122.5" height="116.5"/></clipPath>
</defs>
<rect x="60" y="217" width="661" height="536" fill="#000"/>
<g clip-path="url(#imgclip)"><g filter="url(#soft)">
<rect x="60" y="238" width="662" height="496" fill="#323232" />
<rect x="60" y="238" width="289" height="48" fill="#1a1a1a" />
<rect x="60" y="238" width="289" height="13" fill="#242424" />
<polyline points="60,245.5 349,245.5" fill="none" stroke="#303030" stroke-width="1.2" />
<polyline points="60,250 349,250" fill="none" stroke="#181818" stroke-width="2" />
<rect x="60" y="431" width="172" height="38" fill="#2a2a2a" />
<polygon points="60,471 337,473 337,500 300,500 290,510 60,510" fill="#1a1a1a" />
<rect x="60" y="500" width="130" height="112" fill="#222" />
<rect x="60" y="500" width="90" height="22" fill="#1e1e1e" />
<rect x="188" y="508" width="157" height="104" fill="#303030" />
<polygon points="300,500 337,500 337,478 345,470 345,510 290,510" fill="#303030" />
<polygon points="349,238 361,238 361,272 349,284" fill="#222" />
<rect x="478" y="238" width="97" height="142" fill="#2b2b2b" />
<polygon points="566,238 722,238 722,332 613,332 613,323 607,316 607,280" fill="#383838" />
<polygon points="507,328 576,328 576,380 532,380 532,573 722,573 722,734 340,734 340,612 345,500 462,500 462,437 507,392" fill="#1d1d1d" />
<rect x="340" y="493" width="125" height="119" fill="#242424" />
<rect x="60" y="608" width="190" height="108" fill="#242424" />
<rect x="92" y="608" width="158" height="14" fill="#1a1a1a" />
<rect x="168" y="620" width="78" height="80" fill="#2e2e2e" />
<rect x="60" y="696" width="190" height="18" fill="#2c2c2c" />
<rect x="246" y="608" width="99" height="70" fill="#1e1e1e" />
<rect x="246" y="676" width="99" height="40" fill="#252525" />
<polygon points="60,712.5 722,718.8 722,734 60,734" fill="url(#bandg)" />
<circle cx="230.5" cy="716" r="15" fill="#555" />
<polygon points="537,579 576,579 576,636 528,684 522,709 520,718 506,718 506,690 514,677 514,604" fill="#3e3e3e" />
<circle cx="549.8" cy="603.5" r="10" fill="#2c2c2c" />
<circle cx="549.8" cy="603.5" r="7.5" fill="#5c5c5c" />
<polyline points="531,425.3 525.7,425.3 446,505 446,648 438,656 412,656 352,716" fill="none" stroke="#3f3f3f" stroke-width="1.3" stroke-linejoin="round"/>
<polyline points="531,434.7 524.7,434.7 450.4,509 450.4,649.8 439.8,660.4 413.8,660.4 358.2,716" fill="none" stroke="#3f3f3f" stroke-width="1.3" stroke-linejoin="round"/>
<polyline points="531,444.1 523.7,444.1 454.8,513 454.8,651.6 441.6,664.8 415.6,664.8 364.4,716" fill="none" stroke="#3f3f3f" stroke-width="1.3" stroke-linejoin="round"/>
<polyline points="531,453.4 522.8,453.4 459.2,517 459.2,653.5 443.5,669.2 417.5,669.2 370.6,716" fill="none" stroke="#3f3f3f" stroke-width="1.3" stroke-linejoin="round"/>
<polyline points="531,462.8 521.8,462.8 463.6,521 463.6,655.3 445.3,673.6 419.3,673.6 376.8,716" fill="none" stroke="#3f3f3f" stroke-width="1.3" stroke-linejoin="round"/>
<polyline points="531,472.2 520.8,472.2 468,525 468,684" fill="none" stroke="#3f3f3f" stroke-width="1.3" />
<polyline points="531,481.6 519.8,481.6 472.4,529 472.4,690" fill="none" stroke="#3f3f3f" stroke-width="1.3" />
<polyline points="531,491 518.8,491 476.8,533 476.8,696" fill="none" stroke="#3f3f3f" stroke-width="1.3" />
<polyline points="531,500.3 517.9,500.3 481.2,537 481.2,687" fill="none" stroke="#3f3f3f" stroke-width="1.3" />
<polyline points="531,509.7 516.9,509.7 485.6,541 485.6,693" fill="none" stroke="#3f3f3f" stroke-width="1.3" />
<polyline points="531,519.1 515.9,519.1 490,545 490,684" fill="none" stroke="#3f3f3f" stroke-width="1.3" />
<polyline points="531,528.5 514.9,528.5 494.4,549 494.4,690" fill="none" stroke="#3f3f3f" stroke-width="1.3" />
<polyline points="531,537.9 513.9,537.9 498.8,553 498.8,696" fill="none" stroke="#3f3f3f" stroke-width="1.3" />
<polyline points="531,547.2 513,547.2 503.2,557 503.2,687" fill="none" stroke="#3f3f3f" stroke-width="1.3" />
<path d="M403 643.6 H436 a4.2 4.2 0 0 1 0 8.4 H404" fill="none" stroke="#3f3f3f" stroke-width="1.3"/>
<polyline points="400,610 345,665" fill="none" stroke="#3a3a3a" stroke-width="1.2" />
<polyline points="402,615 345,672" fill="none" stroke="#3a3a3a" stroke-width="1.2" />
<polyline points="404,620 345,679" fill="none" stroke="#3a3a3a" stroke-width="1.2" />
<polyline points="406,625 345,686" fill="none" stroke="#3a3a3a" stroke-width="1.2" />
<path d="M400 718 V706 Q400 692 414 688 H446" fill="none" stroke="#343434" stroke-width="9" stroke-linecap="round"/>
<polyline points="531,387.8 522,387.8 500,365.8 500,372" fill="none" stroke="#3c3c3c" stroke-width="1.2" />
<polyline points="531,397.2 519,397.2 494,377.2 494,372" fill="none" stroke="#3c3c3c" stroke-width="1.2" />
<polyline points="531,406.6 516,406.6 488,388.6 488,372" fill="none" stroke="#3c3c3c" stroke-width="1.2" />
<polyline points="531,415.9 513,415.9 482,399.9 482,372" fill="none" stroke="#3c3c3c" stroke-width="1.2" />
<polyline points="583,623 583,630 538,675 538,700" fill="none" stroke="#454545" stroke-width="1.2" />
<polyline points="592.5,623 592.5,630 547.5,675 547.5,700" fill="none" stroke="#454545" stroke-width="1.2" />
<polyline points="601.9,623 601.9,630 556.9,675 556.9,700" fill="none" stroke="#454545" stroke-width="1.2" />
<polyline points="611.4,623 611.4,630 566.4,675 566.4,700" fill="none" stroke="#454545" stroke-width="1.2" />
<polyline points="620.8,623 620.8,673 602.8,691 602.8,716" fill="none" stroke="#454545" stroke-width="1.2" />
<polyline points="630.3,623 630.3,675 612.3,693 612.3,716" fill="none" stroke="#454545" stroke-width="1.2" />
<polyline points="639.8,623 639.8,677 621.8,695 621.8,716" fill="none" stroke="#454545" stroke-width="1.2" />
<polyline points="649.2,623 649.2,679 631.2,697 631.2,716" fill="none" stroke="#454545" stroke-width="1.2" />
<polyline points="658.7,623 658.7,681 640.7,699 640.7,716" fill="none" stroke="#454545" stroke-width="1.2" />
<polyline points="668.1,623 668.1,677 638.1,707 638.1,716" fill="none" stroke="#454545" stroke-width="1.2" />
<polyline points="677.6,623 677.6,680 647.6,710 647.6,716" fill="none" stroke="#454545" stroke-width="1.2" />
<polyline points="687.1,623 687.1,683 657.1,713 657.1,716" fill="none" stroke="#454545" stroke-width="1.2" />
<polyline points="696.5,623 696.5,686 666.5,716 666.5,716" fill="none" stroke="#454545" stroke-width="1.2" />
<polyline points="706,623 706,689 676,719 676,716" fill="none" stroke="#454545" stroke-width="1.2" />
<polyline points="715.4,623 715.4,692 685.4,722 685.4,716" fill="none" stroke="#454545" stroke-width="1.2" />
<polygon points="478,239 566,239 607,280 607,316 613,323 613,332 565,332 565,292 538,265 478,265" fill="#1b1b1b" />
<polyline points="478,247 570.2,247 600.5,277.3 600.5,316 605.5,323 605.5,332" fill="none" stroke="#3c3c3c" stroke-width="1.2" />
<polyline points="478,251 570.5,251 594,274.5 594,316 599,323 599,332" fill="none" stroke="#3c3c3c" stroke-width="1.2" />
<polyline points="478,255 568.1,255 583,269.9 583,316 588,323 588,332" fill="none" stroke="#3c3c3c" stroke-width="1.2" />
<polyline points="478,259 566,259 572.5,265.5 572.5,316 577.5,323 577.5,332" fill="none" stroke="#3c3c3c" stroke-width="1.2" />
<polyline points="478,262.3 567,262.3 568.5,263.8 568.5,316 573.5,323 573.5,332" fill="none" stroke="#3c3c3c" stroke-width="1.2" />
<polyline points="613,330 613,316 626,304.5 650,304.5 660.5,315 660.5,332" fill="none" stroke="#181818" stroke-width="4" />
<polyline points="624,332 624,322 631,315 646,315 652,321 652,332" fill="none" stroke="#181818" stroke-width="2" />
<polyline points="520,360 545,385 531,400" fill="none" stroke="#3a3a3a" stroke-width="1.1" />
<polyline points="524,363 549,388 531,409" fill="none" stroke="#3a3a3a" stroke-width="1.1" />
<polyline points="528,366 553,391 531,418" fill="none" stroke="#3a3a3a" stroke-width="1.1" />
<polyline points="532,369 557,394 531,427" fill="none" stroke="#3a3a3a" stroke-width="1.1" />
<polygon points="362,286 386,262 476,262 476,363 362,363" fill="#343434" />
<rect x="362" y="246" width="114" height="14" fill="#1e1e1e" />
<polyline points="362,249 476,249" fill="none" stroke="#353535" stroke-width="1" />
<polyline points="362,253 476,253" fill="none" stroke="#353535" stroke-width="1" />
<polyline points="362,257 476,257" fill="none" stroke="#353535" stroke-width="1" />
<polyline points="349,284 373,261 476,261" fill="none" stroke="#151515" stroke-width="3" />
<polyline points="448,341 424,365" fill="none" stroke="#171717" stroke-width="4" />
<polyline points="419,341 398,363" fill="none" stroke="#171717" stroke-width="4" />
<polyline points="123,397 123,410 103,431 97,438" fill="none" stroke="#161616" stroke-width="8" stroke-linejoin="round"/>
<polyline points="123,397 123,410 103,431 97,438" fill="none" stroke="#333" stroke-width="3.5" stroke-linejoin="round"/>
<polyline points="141,397 141,434 134,441" fill="none" stroke="#161616" stroke-width="8" stroke-linejoin="round"/>
<polyline points="141,397 141,434 134,441" fill="none" stroke="#333" stroke-width="3.5" stroke-linejoin="round"/>
<polyline points="159.5,397 159.5,436 165,442" fill="none" stroke="#161616" stroke-width="8" stroke-linejoin="round"/>
<polyline points="159.5,397 159.5,436 165,442" fill="none" stroke="#333" stroke-width="3.5" stroke-linejoin="round"/>
<polyline points="179,397 179,408 201,431 204,438" fill="none" stroke="#161616" stroke-width="8" stroke-linejoin="round"/>
<polyline points="179,397 179,408 201,431 204,438" fill="none" stroke="#333" stroke-width="3.5" stroke-linejoin="round"/>
<rect x="60" y="327" width="35" height="14" fill="#191919" />
<rect x="60" y="330" width="35" height="8" fill="#363636" />
<polyline points="236,512 322,512 345,489" fill="none" stroke="#1b1b1b" stroke-width="2" />
<circle cx="71" cy="265.5" r="14" fill="#161616" />
<circle cx="71" cy="265.5" r="10.5" fill="url(#pg)" />
<circle cx="107.8" cy="265.5" r="14" fill="#161616" />
<circle cx="107.8" cy="265.5" r="10.5" fill="url(#pg)" />
<circle cx="144.5" cy="265.5" r="14" fill="#161616" />
<circle cx="144.5" cy="265.5" r="10.5" fill="url(#pg)" />
<circle cx="181.5" cy="265.5" r="14" fill="#161616" />
<circle cx="181.5" cy="265.5" r="10.5" fill="url(#pg)" />
<circle cx="218.5" cy="265.5" r="14" fill="#161616" />
<circle cx="218.5" cy="265.5" r="10.5" fill="url(#pgb)" />
<ellipse cx="218.5" cy="265.5" rx="6.5" ry="10.3" fill="#686868"/>
<ellipse cx="218.5" cy="265.5" rx="4.2" ry="6.3" fill="#5c5c5c"/>
<circle cx="255.4" cy="265.5" r="14" fill="#161616" />
<circle cx="255.4" cy="265.5" r="10.5" fill="url(#pg)" />
<circle cx="292.5" cy="265.5" r="14" fill="#161616" />
<circle cx="292.5" cy="265.5" r="10.5" fill="url(#pg)" />
<rect x="315" y="254" width="28" height="26" fill="#141414" />
<rect x="318.3" y="257" width="21.9" height="20" fill="#d8d8d8" />
<polygon points="322,260 336.5,260 333,267 336.5,274 322,274 325.5,267" fill="#707070" />
<rect x="80" y="432.5" width="27.5" height="27.5" fill="#151515" />
<rect x="82.5" y="435" width="22.5" height="22.5" fill="#585858" />
<circle cx="93.7" cy="446" r="7" fill="#666" />
<circle cx="130.4" cy="446" r="13.5" fill="#161616" />
<circle cx="130.4" cy="446" r="10" fill="url(#pg)" />
<path d="M123.4 447 A7 7 0 0 0 131.4 453.5" stroke="#d8d8d8" stroke-width="1.6" fill="none"/>
<circle cx="168.1" cy="446" r="13.5" fill="#161616" />
<circle cx="168.1" cy="446" r="10" fill="url(#pg)" />
<path d="M161.1 447 A7 7 0 0 0 169.1 453.5" stroke="#d8d8d8" stroke-width="1.6" fill="none"/>
<circle cx="204.8" cy="446" r="13.5" fill="#161616" />
<circle cx="204.8" cy="446" r="10" fill="url(#pg)" />
<path d="M197.8 447 A7 7 0 0 0 205.8 453.5" stroke="#d8d8d8" stroke-width="1.6" fill="none"/>
<circle cx="69" cy="486" r="14" fill="#161616" />
<circle cx="69" cy="486" r="10.5" fill="url(#pgd)" />
<circle cx="105.2" cy="486" r="14" fill="#161616" />
<circle cx="105.2" cy="486" r="10.5" fill="url(#pgd)" />
<circle cx="142.3" cy="486" r="14" fill="#161616" />
<circle cx="142.3" cy="486" r="10.5" fill="url(#pgd)" />
<circle cx="179" cy="486" r="14" fill="#161616" />
<circle cx="179" cy="486" r="10.5" fill="url(#pg)" />
<circle cx="216.7" cy="486" r="14" fill="#161616" />
<circle cx="216.7" cy="486" r="10.5" fill="url(#pg)" />
<circle cx="253.2" cy="486" r="14" fill="#161616" />
<circle cx="253.2" cy="486" r="10.5" fill="url(#pg)" />
<circle cx="290.5" cy="486" r="14" fill="#161616" />
<circle cx="290.5" cy="486" r="10.5" fill="url(#pg)" />
<circle cx="327.2" cy="486" r="14" fill="#161616" />
<circle cx="327.2" cy="486" r="10.5" fill="url(#pgb)" />
<ellipse cx="327.2" cy="486" rx="6.5" ry="10.3" fill="#686868"/>
<ellipse cx="327.2" cy="486" rx="4.2" ry="6.3" fill="#5c5c5c"/>
<circle cx="94.7" cy="333.5" r="12.5" fill="#161616" />
<circle cx="94.7" cy="333.5" r="9.5" fill="url(#pg)" />
<circle cx="208" cy="335" r="14" fill="#161616" />
<circle cx="208" cy="335" r="10" fill="url(#pgb)" />
<ellipse cx="208" cy="335" rx="6.2" ry="9.8" fill="#686868"/>
<ellipse cx="208" cy="335" rx="4" ry="6" fill="#5c5c5c"/>
<circle cx="390" cy="340.5" r="12.5" fill="#161616" />
<circle cx="390" cy="340.5" r="9" fill="url(#pg)" />
<circle cx="419.2" cy="340.5" r="12.5" fill="#161616" />
<circle cx="419.2" cy="340.5" r="9" fill="url(#pg)" />
<circle cx="447.8" cy="341" r="12.5" fill="#161616" />
<circle cx="447.8" cy="341" r="9" fill="url(#pgb)" />
<ellipse cx="447.8" cy="341" rx="5.6" ry="8.8" fill="#686868"/>
<ellipse cx="447.8" cy="341" rx="3.6" ry="5.4" fill="#5c5c5c"/>
<circle cx="234.2" cy="462.6" r="5" fill="#2a2a2a" />
<circle cx="234.2" cy="462.6" r="3" fill="#050505" />
<circle cx="307.4" cy="350.7" r="5" fill="#2a2a2a" />
<circle cx="307.4" cy="350.7" r="3" fill="#050505" />
<circle cx="539.9" cy="322.3" r="5" fill="#2a2a2a" />
<circle cx="539.9" cy="322.3" r="3" fill="#050505" />
<circle cx="684.8" cy="266.4" r="5" fill="#2a2a2a" />
<circle cx="684.8" cy="266.4" r="3" fill="#050505" />
<circle cx="681" cy="324.6" r="5" fill="#2a2a2a" />
<circle cx="681" cy="324.6" r="3" fill="#050505" />
<circle cx="620.5" cy="323" r="5" fill="#2a2a2a" />
<circle cx="620.5" cy="323" r="3" fill="#050505" />
<circle cx="553.8" cy="323" r="4.9" fill="#505050" />
<circle cx="553.8" cy="323" r="2.7" fill="#050505" />
<circle cx="518.7" cy="336.6" r="4.9" fill="#505050" />
<circle cx="518.7" cy="336.6" r="2.7" fill="#050505" />
<circle cx="542.5" cy="348" r="4.9" fill="#505050" />
<circle cx="542.5" cy="348" r="2.7" fill="#050505" />
<circle cx="518" cy="356.7" r="4.9" fill="#505050" />
<circle cx="518" cy="356.7" r="2.7" fill="#050505" />
<circle cx="533.3" cy="358" r="4.9" fill="#505050" />
<circle cx="533.3" cy="358" r="2.7" fill="#050505" />
<circle cx="570.6" cy="335.6" r="4.9" fill="#505050" />
<circle cx="570.6" cy="335.6" r="2.7" fill="#050505" />
<circle cx="511.5" cy="483.4" r="4.9" fill="#505050" />
<circle cx="511.5" cy="483.4" r="2.7" fill="#050505" />
<circle cx="389" cy="501.5" r="4.9" fill="#505050" />
<circle cx="389" cy="501.5" r="2.7" fill="#050505" />
<circle cx="185" cy="637.2" r="4.9" fill="#505050" />
<circle cx="185" cy="637.2" r="2.7" fill="#050505" />
<circle cx="75.5" cy="699.7" r="4.9" fill="#505050" />
<circle cx="75.5" cy="699.7" r="2.7" fill="#050505" />
<circle cx="148.3" cy="705" r="4.9" fill="#505050" />
<circle cx="148.3" cy="705" r="2.7" fill="#050505" />
<circle cx="171.7" cy="692.8" r="4.9" fill="#505050" />
<circle cx="171.7" cy="692.8" r="2.7" fill="#050505" />
<circle cx="205.8" cy="690.8" r="4.9" fill="#505050" />
<circle cx="205.8" cy="690.8" r="2.7" fill="#050505" />
<circle cx="260.8" cy="682.3" r="4.9" fill="#505050" />
<circle cx="260.8" cy="682.3" r="2.7" fill="#050505" />
<circle cx="285.6" cy="699" r="4.9" fill="#505050" />
<circle cx="285.6" cy="699" r="2.7" fill="#050505" />
<circle cx="311" cy="704.7" r="4.9" fill="#505050" />
<circle cx="311" cy="704.7" r="2.7" fill="#050505" />
<circle cx="324.2" cy="699.5" r="4.9" fill="#505050" />
<circle cx="324.2" cy="699.5" r="2.7" fill="#050505" />
<circle cx="379.8" cy="658.5" r="4.9" fill="#505050" />
<circle cx="379.8" cy="658.5" r="2.7" fill="#050505" />
<circle cx="378.8" cy="709.6" r="4.9" fill="#505050" />
<circle cx="378.8" cy="709.6" r="2.7" fill="#050505" />
<circle cx="415.5" cy="712" r="4.9" fill="#505050" />
<circle cx="415.5" cy="712" r="2.7" fill="#050505" />
<circle cx="394.7" cy="643.6" r="4.9" fill="#505050" />
<circle cx="394.7" cy="643.6" r="2.7" fill="#050505" />
<circle cx="538.9" cy="637.2" r="4.9" fill="#505050" />
<circle cx="538.9" cy="637.2" r="2.7" fill="#050505" />
<circle cx="508" cy="673.3" r="4.9" fill="#505050" />
<circle cx="508" cy="673.3" r="2.7" fill="#050505" />
<circle cx="445.2" cy="688.2" r="4.9" fill="#505050" />
<circle cx="445.2" cy="688.2" r="2.7" fill="#050505" />
<circle cx="413.9" cy="687.6" r="4.9" fill="#505050" />
<circle cx="413.9" cy="687.6" r="2.7" fill="#050505" />
<circle cx="417.9" cy="712" r="4.9" fill="#505050" />
<circle cx="417.9" cy="712" r="2.7" fill="#050505" />
<circle cx="434.7" cy="712" r="4.9" fill="#505050" />
<circle cx="434.7" cy="712" r="2.7" fill="#050505" />
<circle cx="472.4" cy="711" r="4.9" fill="#505050" />
<circle cx="472.4" cy="711" r="2.7" fill="#050505" />
<circle cx="490.3" cy="708" r="4.9" fill="#505050" />
<circle cx="490.3" cy="708" r="2.7" fill="#050505" />
<circle cx="525" cy="705.5" r="4.9" fill="#505050" />
<circle cx="525" cy="705.5" r="2.7" fill="#050505" />
<circle cx="542.9" cy="707" r="4.9" fill="#505050" />
<circle cx="542.9" cy="707" r="2.7" fill="#050505" />
<circle cx="582.5" cy="711" r="4.9" fill="#505050" />
<circle cx="582.5" cy="711" r="2.7" fill="#050505" />
<circle cx="595.4" cy="664.4" r="4.9" fill="#505050" />
<circle cx="595.4" cy="664.4" r="2.7" fill="#050505" />
<circle cx="473.4" cy="521.5" r="4.9" fill="#505050" />
<circle cx="473.4" cy="521.5" r="2.7" fill="#050505" />
<circle cx="473.4" cy="560.5" r="4.9" fill="#505050" />
<circle cx="473.4" cy="560.5" r="2.7" fill="#050505" />
<circle cx="514" cy="537.5" r="4.9" fill="#505050" />
<circle cx="514" cy="537.5" r="2.7" fill="#050505" />
<circle cx="624" cy="690" r="4.9" fill="#505050" />
<circle cx="624" cy="690" r="2.7" fill="#050505" />
<circle cx="677" cy="686" r="4.9" fill="#505050" />
<circle cx="677" cy="686" r="2.7" fill="#050505" />
<circle cx="638" cy="708" r="4.9" fill="#505050" />
<circle cx="638" cy="708" r="2.7" fill="#050505" />
<circle cx="602" cy="711" r="4.9" fill="#505050" />
<circle cx="602" cy="711" r="2.7" fill="#050505" />
<circle cx="620" cy="712" r="4.9" fill="#505050" />
<circle cx="620" cy="712" r="2.7" fill="#050505" />
<circle cx="596" cy="664" r="4.9" fill="#505050" />
<circle cx="596" cy="664" r="2.7" fill="#050505" />
<rect x="468.5" y="516.5" width="10" height="49" rx="5" fill="#2e2e2e" stroke="#3a3a3a" stroke-width="1"/>
<circle cx="473.4" cy="521.5" r="2.6" fill="#050505" />
<circle cx="473.4" cy="560.5" r="2.6" fill="#050505" />
<rect x="112" y="319" width="81" height="64" fill="#181818" />
<rect x="115" y="321.5" width="75" height="59" fill="#1d1d1d" />
<polyline points="118.5,304 118.5,297 125,291 183,291 187.5,296 187.5,304" fill="none" stroke="#161616" stroke-width="2.5" />
<rect x="118.5" y="292.5" width="12" height="30" rx="3" fill="#141414"/>
<rect x="120.9" y="296.5" width="7.2" height="7" fill="#e4e4e4" />
<rect x="120.9" y="305" width="7.2" height="5.5" fill="#b4b4b4" />
<rect x="123.5" y="297" width="1.6" height="13" fill="#6a6a6a" />
<rect x="120.5" y="312.5" width="8" height="9.5" fill="#808080" />
<rect x="137.3" y="292.5" width="12" height="30" rx="3" fill="#141414"/>
<rect x="139.7" y="296.5" width="7.2" height="7" fill="#e4e4e4" />
<rect x="139.7" y="305" width="7.2" height="5.5" fill="#b4b4b4" />
<rect x="142.3" y="297" width="1.6" height="13" fill="#6a6a6a" />
<rect x="139.3" y="312.5" width="8" height="9.5" fill="#808080" />
<rect x="155.5" y="292.5" width="12" height="30" rx="3" fill="#141414"/>
<rect x="157.9" y="296.5" width="7.2" height="7" fill="#e4e4e4" />
<rect x="157.9" y="305" width="7.2" height="5.5" fill="#b4b4b4" />
<rect x="160.5" y="297" width="1.6" height="13" fill="#6a6a6a" />
<rect x="157.5" y="312.5" width="8" height="9.5" fill="#808080" />
<rect x="175" y="292.5" width="12" height="30" rx="3" fill="#141414"/>
<rect x="177.4" y="296.5" width="7.2" height="7" fill="#e4e4e4" />
<rect x="177.4" y="305" width="7.2" height="5.5" fill="#b4b4b4" />
<rect x="180" y="297" width="1.6" height="13" fill="#6a6a6a" />
<rect x="177" y="312.5" width="8" height="9.5" fill="#808080" />
<rect x="117" y="379" width="12" height="22" rx="3" fill="#141414"/>
<rect x="119" y="380" width="8" height="8" fill="#747474" />
<rect x="119.4" y="389" width="7.2" height="7" fill="#d4d4d4" />
<rect x="122.2" y="389.5" width="1.4" height="6.5" fill="#6a6a6a" />
<rect x="135" y="379" width="12" height="22" rx="3" fill="#141414"/>
<rect x="137" y="380" width="8" height="8" fill="#747474" />
<rect x="137.4" y="389" width="7.2" height="7" fill="#d4d4d4" />
<rect x="140.2" y="389.5" width="1.4" height="6.5" fill="#6a6a6a" />
<rect x="153.5" y="379" width="12" height="22" rx="3" fill="#141414"/>
<rect x="155.5" y="380" width="8" height="8" fill="#747474" />
<rect x="155.9" y="389" width="7.2" height="7" fill="#d4d4d4" />
<rect x="158.7" y="389.5" width="1.4" height="6.5" fill="#6a6a6a" />
<rect x="173" y="379" width="12" height="22" rx="3" fill="#141414"/>
<rect x="175" y="380" width="8" height="8" fill="#747474" />
<rect x="175.4" y="389" width="7.2" height="7" fill="#d4d4d4" />
<rect x="178.2" y="389.5" width="1.4" height="6.5" fill="#6a6a6a" />
<text x="125" y="346" font-size="12" textLength="50" lengthAdjust="spacingAndGlyphs" fill="#333" >93CC46</text>
<text x="125" y="358.5" font-size="12" textLength="50" lengthAdjust="spacingAndGlyphs" fill="#363636" >8D U45</text>
<text x="139" y="371.5" font-size="12" textLength="36" lengthAdjust="spacingAndGlyphs" fill="#383838" >0602</text>
<circle cx="132" cy="367" r="2.3" fill="#383838" />
<polyline points="60,285.5 347,285.5 347,367 327.3,367 327.3,389 346.5,389 346.5,472.5 336,472 60,469.5" fill="none" stroke="#fafafa" stroke-width="3" stroke-linejoin="miter"/>
<polyline points="113.5,355.5 76,355.5 76,383.5 95.5,383.5 95.5,401.5 76,401.5 76,430 225.5,430 225.5,356 190.5,356" fill="none" stroke="#fafafa" stroke-width="3" />
<polyline points="113.5,321 113.5,381 118,381" fill="none" stroke="#c4c4c4" stroke-width="2.2" />
<polyline points="190.5,321 190.5,381 186,381" fill="none" stroke="#c4c4c4" stroke-width="2.2" />
<rect x="361" y="245.5" width="116.5" height="118.5" rx="0" fill="none" stroke="#fafafa" stroke-width="3"/>
<rect x="348.5" y="378" width="113.5" height="116" fill="#2a2a2a" />
<g clip-path="url(#c17clip)">
<polyline points="396,490 456,430" fill="none" stroke="#424242" stroke-width="3" />
<polyline points="406,490 466,430" fill="none" stroke="#424242" stroke-width="3" />
<polyline points="416,490 476,430" fill="none" stroke="#424242" stroke-width="3" />
<polyline points="426,490 486,430" fill="none" stroke="#424242" stroke-width="3" />
<polyline points="436,490 496,430" fill="none" stroke="#424242" stroke-width="3" />
<polyline points="446,490 506,430" fill="none" stroke="#424242" stroke-width="3" />
<polyline points="456,490 516,430" fill="none" stroke="#424242" stroke-width="3" />
<polyline points="466,490 526,430" fill="none" stroke="#424242" stroke-width="3" />
<polyline points="476,490 536,430" fill="none" stroke="#424242" stroke-width="3" />
</g>
<circle cx="399.5" cy="434.8" r="46.5" fill="none" stroke="#fafafa" stroke-width="3"/>
<path d="M401 388 A46.8 46.8 0 0 0 401 481.6 Z" fill="#fafafa"/>
<circle cx="379.8" cy="435.2" r="15.5" fill="#262626" />
<circle cx="379.8" cy="435.2" r="9" fill="#6a6a6a" />
<circle cx="379.8" cy="434.2" r="5.5" fill="#8a8a8a" />
<path d="M409 438 Q408 428 416 426 Q426 424 427 431 L434 437 L427 439 Z" fill="#e4e4e4"/>
<circle cx="413" cy="436" r="4.5" fill="#d0d0d0" />
<text x="237.5" y="343" font-size="25" textLength="24" lengthAdjust="spacingAndGlyphs" fill="#fafafa" stroke="#fafafa" stroke-width="0.5" >U2</text>
<text x="357" y="386.5" font-size="25" textLength="28" lengthAdjust="spacingAndGlyphs" fill="#fafafa" stroke="#fafafa" stroke-width="0.5" >JP1</text>
<text x="275.5" y="430.5" font-size="23.5" textLength="24" lengthAdjust="spacingAndGlyphs" fill="#fafafa" stroke="#fafafa" stroke-width="0.5" >C8</text>
<text x="487.5" y="267" font-size="21" textLength="20" lengthAdjust="spacingAndGlyphs" fill="#fafafa" stroke="#fafafa" stroke-width="0.5" >R2</text>
<text x="546" y="267" font-size="21" textLength="20" lengthAdjust="spacingAndGlyphs" fill="#fafafa" stroke="#fafafa" stroke-width="0.5" >R3</text>
<text x="650" y="269.5" font-size="20.5" textLength="20" lengthAdjust="spacingAndGlyphs" fill="#fafafa" stroke="#fafafa" stroke-width="0.5" >C2</text>
<text x="702" y="269.5" font-size="20.5" textLength="20" lengthAdjust="spacingAndGlyphs" fill="#fafafa" stroke="#fafafa" stroke-width="0.5" >B1</text>
<text x="454" y="446.5" font-size="25" textLength="52" lengthAdjust="spacingAndGlyphs" fill="#fafafa" stroke="#fafafa" stroke-width="0.5" >R9R8</text>
<text x="418.5" y="498" font-size="24" textLength="33" lengthAdjust="spacingAndGlyphs" fill="#fafafa" stroke="#fafafa" stroke-width="0.5" >C17</text>
<text x="72.5" y="519.5" font-size="22.5" textLength="24.5" lengthAdjust="spacingAndGlyphs" fill="#fafafa" stroke="#fafafa" stroke-width="0.5" >D4</text>
<text x="113.8" y="519.5" font-size="22.5" textLength="24" lengthAdjust="spacingAndGlyphs" fill="#fafafa" stroke="#fafafa" stroke-width="0.5" >D2</text>
<text x="156.5" y="519.5" font-size="22.5" textLength="25.5" lengthAdjust="spacingAndGlyphs" fill="#fafafa" stroke="#fafafa" stroke-width="0.5" >D5</text>
<text x="199.5" y="618" font-size="24" textLength="38" lengthAdjust="spacingAndGlyphs" fill="#fafafa" stroke="#fafafa" stroke-width="0.5" >R30</text>
<text x="199.5" y="639.5" font-size="24" textLength="38" lengthAdjust="spacingAndGlyphs" fill="#fafafa" stroke="#fafafa" stroke-width="0.5" >R29</text>
<text x="199.5" y="660.5" font-size="24" textLength="33.5" lengthAdjust="spacingAndGlyphs" fill="#fafafa" stroke="#fafafa" stroke-width="0.5" >R31</text>
<text x="60.5" y="639.5" font-size="22.5" textLength="20.5" lengthAdjust="spacingAndGlyphs" fill="#fafafa" stroke="#fafafa" stroke-width="0.5" >29</text>
<text x="168" y="684.5" font-size="25" textLength="40" lengthAdjust="spacingAndGlyphs" fill="#fafafa" stroke="#fafafa" stroke-width="0.5" >C34</text>
<text x="262.7" y="537.5" font-size="24" textLength="25" lengthAdjust="spacingAndGlyphs" fill="#fafafa" stroke="#fafafa" stroke-width="0.5" >Q2</text>
<text x="304.5" y="537.5" font-size="24" textLength="38" lengthAdjust="spacingAndGlyphs" fill="#fafafa" stroke="#fafafa" stroke-width="0.5" >R32</text>
<text x="357" y="648.5" font-size="25" textLength="24" lengthAdjust="spacingAndGlyphs" fill="#fafafa" stroke="#fafafa" stroke-width="0.5" >D3</text>
<text x="435.7" y="635.8" font-size="25" textLength="32" lengthAdjust="spacingAndGlyphs" fill="#fafafa" stroke="#fafafa" stroke-width="0.5" >R10</text>
<text x="631" y="688.5" font-size="24.5" textLength="23.5" lengthAdjust="spacingAndGlyphs" fill="#fafafa" stroke="#fafafa" stroke-width="0.5" >C9</text>
<text x="435.5" y="555.7" font-size="24" textLength="18.5" lengthAdjust="spacingAndGlyphs" fill="#bdbdbd" stroke="#bdbdbd" stroke-width="0.4" >21</text>
<rect x="258" y="438.5" width="53" height="22.5" rx="0" fill="none" stroke="#fafafa" stroke-width="2"/>
<rect x="263" y="442.5" width="20.5" height="14.5" fill="#1a1a1a" />
<rect x="288" y="442.5" width="19" height="14.5" fill="#1a1a1a" />
<path d="M266 445 l5 4 l-5 4 M272 449 h9 M276 446 v6" stroke="#e8e8e8" stroke-width="1.8" fill="none"/>
<path d="M290 444.5 l8 4.5 l-8 4.5 z" fill="#e8e8e8"/><path d="M299 449 h6 M302 446 v6" stroke="#ccc" stroke-width="1.6"/>
<rect x="504.5" y="265" width="22" height="55.5" rx="11" ry="11" fill="none" stroke="#fafafa" stroke-width="1.9"/>
<rect x="528.8" y="266" width="22" height="56.5" rx="11" ry="11" fill="none" stroke="#fafafa" stroke-width="1.9"/>
<rect x="509.5" y="274" width="12.5" height="38" fill="#191919" />
<rect x="511" y="281" width="9.5" height="18" fill="#3c3c3c" />
<rect x="510.5" y="276.5" width="10.5" height="5" fill="#d0d0d0" />
<rect x="510.5" y="299" width="10.5" height="3.5" fill="#bbb" />
<circle cx="511" cy="308" r="1.2" fill="#ddd" />
<circle cx="520" cy="308" r="1.2" fill="#ddd" />
<rect x="533.5" y="274" width="13" height="40" fill="#191919" />
<rect x="535" y="283" width="10" height="17" fill="#3e3e3e" />
<rect x="535" y="279.5" width="10" height="3.5" fill="#9a9a9a" />
<rect x="535" y="300" width="10" height="4" fill="#a5a5a5" />
<circle cx="535" cy="309" r="1.2" fill="#ddd" />
<circle cx="544.5" cy="309" r="1.2" fill="#ddd" />
<text x="512" y="293" font-size="6" textLength="8" lengthAdjust="spacingAndGlyphs" fill="#999" >102</text>
<text x="536" y="294" font-size="6" textLength="8" lengthAdjust="spacingAndGlyphs" fill="#999" >102</text>
<rect x="450.5" y="369" width="21" height="55.5" rx="10.5" ry="10.5" fill="none" stroke="#fafafa" stroke-width="1.9"/>
<rect x="478.2" y="369" width="22.1" height="56.5" rx="11.1" ry="11.1" fill="none" stroke="#fafafa" stroke-width="1.9"/>
<rect x="483" y="378" width="13" height="40" fill="#191919" />
<rect x="484.5" y="387" width="10" height="18" fill="#3e3e3e" />
<rect x="484.5" y="383.5" width="10" height="3.5" fill="#9a9a9a" />
<rect x="484.5" y="405" width="10" height="3.5" fill="#a5a5a5" />
<rect x="455" y="378" width="12.5" height="40" fill="#191919" />
<rect x="456.5" y="387" width="9.5" height="18" fill="#3e3e3e" />
<rect x="456.5" y="383.5" width="9.5" height="3.5" fill="#9a9a9a" />
<rect x="456.5" y="405" width="9.5" height="3.5" fill="#a5a5a5" />
<text x="485.5" y="399" font-size="6" textLength="8" lengthAdjust="spacingAndGlyphs" fill="#999" >103</text>
<rect x="673.5" y="270.5" width="21" height="49.5" rx="0" fill="none" stroke="#fafafa" stroke-width="1.9"/>
<rect x="698" y="270.5" width="20" height="50.5" rx="6" fill="none" stroke="#fafafa" stroke-width="1.9"/>
<rect x="677" y="275" width="14.5" height="41" fill="#1a1a1a" />
<rect x="678.5" y="283" width="11.5" height="4" fill="#b0b0b0" />
<rect x="678.5" y="299" width="11.5" height="4.5" fill="#b8b8b8" />
<rect x="701" y="275" width="15" height="41" fill="#1a1a1a" />
<rect x="702" y="282" width="14" height="4.5" fill="#9a9a9a" />
<rect x="702" y="300" width="14" height="4.5" fill="#a0a0a0" />
<circle cx="678.5" cy="277" r="1.1" fill="#ddd" />
<circle cx="690" cy="277" r="1.1" fill="#ddd" />
<circle cx="678.5" cy="312" r="1.1" fill="#ddd" />
<circle cx="690" cy="312" r="1.1" fill="#ddd" />
<polyline points="584.3,297.5 584.3,328" fill="none" stroke="#fafafa" stroke-width="3.5" stroke-linecap="round"/>
<polyline points="513.5,428 526.5,428" fill="none" stroke="#fafafa" stroke-width="3" />
<polyline points="494.7,473.7 526.4,473.7" fill="none" stroke="#fafafa" stroke-width="3" />
<polyline points="513,521.3 525.4,521.3" fill="none" stroke="#fafafa" stroke-width="4" stroke-linecap="round"/>
<polyline points="494.2,568.9 525.4,568.9" fill="none" stroke="#d8d8d8" stroke-width="2.6" />
<polyline points="666.3,633.5 666.3,662" fill="none" stroke="#fafafa" stroke-width="3.5" />
<polyline points="711.3,633.5 711.3,644" fill="none" stroke="#fafafa" stroke-width="3.5" />
<polyline points="618.6,633.5 618.6,645" fill="none" stroke="#fafafa" stroke-width="2.5" />
<path d="M632 316 q-2.5 3 0 6 q2.5 3 0 6" stroke="#eee" stroke-width="2.2" fill="none"/>
<path d="M686 320 q-2 3 0 5.5" stroke="#ddd" stroke-width="2" fill="none"/>
<polyline points="446,462.5 462.5,462.5" fill="none" stroke="#fafafa" stroke-width="3" />
<polyline points="453.5,455 453.5,470" fill="none" stroke="#fafafa" stroke-width="3" />
<polyline points="570.5,386 570.5,373 722,373" fill="none" stroke="#e0e0e0" stroke-width="2.5" />
<polygon points="576.5,377.5 722,377.5 722,573 587,573 580.5,566 576.5,566" fill="#161616" />
<rect x="578" y="379" width="144" height="5" fill="#1c1c1c" />
<circle cx="613" cy="543.5" r="13" fill="#111" />
<circle cx="607.5" cy="543.5" r="1.2" fill="#777" />
<circle cx="617.5" cy="543.5" r="1.2" fill="#777" />
<rect x="580.2" y="329" width="7.2" height="29" fill="#1b1b1b" />
<rect x="581.4" y="331" width="4.8" height="25" rx="1.5" fill="#7c7c7c"/>
<rect x="581.4" y="334" width="4.8" height="4.5" fill="#c4c4c4" />
<rect x="583.2" y="359.5" width="5.4" height="18.5" rx="1.2" fill="#9c9c9c"/>
<rect x="583.2" y="371.5" width="5.4" height="3" fill="#d2d2d2" />
<rect x="589.7" y="329" width="7.2" height="29" fill="#1b1b1b" />
<rect x="590.9" y="331" width="4.8" height="25" rx="1.5" fill="#7c7c7c"/>
<rect x="590.9" y="334" width="4.8" height="4.5" fill="#c4c4c4" />
<rect x="592.7" y="359.5" width="5.4" height="18.5" rx="1.2" fill="#9c9c9c"/>
<rect x="592.7" y="371.5" width="5.4" height="3" fill="#d2d2d2" />
<rect x="599.1" y="329" width="7.2" height="29" fill="#1b1b1b" />
<rect x="600.3" y="331" width="4.8" height="25" rx="1.5" fill="#7c7c7c"/>
<rect x="600.3" y="334" width="4.8" height="4.5" fill="#c4c4c4" />
<rect x="602.1" y="359.5" width="5.4" height="18.5" rx="1.2" fill="#9c9c9c"/>
<rect x="602.1" y="371.5" width="5.4" height="3" fill="#d2d2d2" />
<rect x="608.6" y="329" width="7.2" height="29" fill="#1b1b1b" />
<rect x="609.8" y="331" width="4.8" height="25" rx="1.5" fill="#7c7c7c"/>
<rect x="609.8" y="334" width="4.8" height="4.5" fill="#c4c4c4" />
<rect x="611.6" y="359.5" width="5.4" height="18.5" rx="1.2" fill="#9c9c9c"/>
<rect x="611.6" y="371.5" width="5.4" height="3" fill="#d2d2d2" />
<rect x="618" y="329" width="7.2" height="29" fill="#1b1b1b" />
<rect x="619.2" y="331" width="4.8" height="25" rx="1.5" fill="#7c7c7c"/>
<rect x="619.2" y="334" width="4.8" height="4.5" fill="#c4c4c4" />
<rect x="621" y="359.5" width="5.4" height="18.5" rx="1.2" fill="#9c9c9c"/>
<rect x="621" y="371.5" width="5.4" height="3" fill="#d2d2d2" />
<rect x="627.5" y="329" width="7.2" height="29" fill="#1b1b1b" />
<rect x="628.7" y="331" width="4.8" height="25" rx="1.5" fill="#7c7c7c"/>
<rect x="628.7" y="334" width="4.8" height="4.5" fill="#c4c4c4" />
<rect x="630.5" y="359.5" width="5.4" height="18.5" rx="1.2" fill="#9c9c9c"/>
<rect x="630.5" y="371.5" width="5.4" height="3" fill="#d2d2d2" />
<rect x="637" y="329" width="7.2" height="29" fill="#1b1b1b" />
<rect x="638.2" y="331" width="4.8" height="25" rx="1.5" fill="#7c7c7c"/>
<rect x="638.2" y="334" width="4.8" height="4.5" fill="#c4c4c4" />
<rect x="640" y="359.5" width="5.4" height="18.5" rx="1.2" fill="#9c9c9c"/>
<rect x="640" y="371.5" width="5.4" height="3" fill="#d2d2d2" />
<rect x="646.4" y="329" width="7.2" height="29" fill="#1b1b1b" />
<rect x="647.6" y="331" width="4.8" height="25" rx="1.5" fill="#7c7c7c"/>
<rect x="647.6" y="334" width="4.8" height="4.5" fill="#c4c4c4" />
<rect x="649.4" y="359.5" width="5.4" height="18.5" rx="1.2" fill="#9c9c9c"/>
<rect x="649.4" y="371.5" width="5.4" height="3" fill="#d2d2d2" />
<rect x="655.9" y="329" width="7.2" height="29" fill="#1b1b1b" />
<rect x="657.1" y="331" width="4.8" height="25" rx="1.5" fill="#7c7c7c"/>
<rect x="657.1" y="334" width="4.8" height="4.5" fill="#c4c4c4" />
<rect x="658.9" y="359.5" width="5.4" height="18.5" rx="1.2" fill="#9c9c9c"/>
<rect x="658.9" y="371.5" width="5.4" height="3" fill="#d2d2d2" />
<rect x="665.3" y="329" width="7.2" height="29" fill="#1b1b1b" />
<rect x="666.5" y="331" width="4.8" height="25" rx="1.5" fill="#7c7c7c"/>
<rect x="666.5" y="334" width="4.8" height="4.5" fill="#c4c4c4" />
<rect x="668.3" y="359.5" width="5.4" height="18.5" rx="1.2" fill="#9c9c9c"/>
<rect x="668.3" y="371.5" width="5.4" height="3" fill="#d2d2d2" />
<rect x="674.8" y="329" width="7.2" height="29" fill="#1b1b1b" />
<rect x="676" y="331" width="4.8" height="25" rx="1.5" fill="#7c7c7c"/>
<rect x="676" y="334" width="4.8" height="4.5" fill="#c4c4c4" />
<rect x="677.8" y="359.5" width="5.4" height="18.5" rx="1.2" fill="#9c9c9c"/>
<rect x="677.8" y="371.5" width="5.4" height="3" fill="#d2d2d2" />
<rect x="684.3" y="329" width="7.2" height="29" fill="#1b1b1b" />
<rect x="685.5" y="331" width="4.8" height="25" rx="1.5" fill="#7c7c7c"/>
<rect x="685.5" y="334" width="4.8" height="4.5" fill="#c4c4c4" />
<rect x="687.3" y="359.5" width="5.4" height="18.5" rx="1.2" fill="#9c9c9c"/>
<rect x="687.3" y="371.5" width="5.4" height="3" fill="#d2d2d2" />
<rect x="693.7" y="329" width="7.2" height="29" fill="#1b1b1b" />
<rect x="694.9" y="331" width="4.8" height="25" rx="1.5" fill="#7c7c7c"/>
<rect x="694.9" y="334" width="4.8" height="4.5" fill="#c4c4c4" />
<rect x="696.7" y="359.5" width="5.4" height="18.5" rx="1.2" fill="#9c9c9c"/>
<rect x="696.7" y="371.5" width="5.4" height="3" fill="#d2d2d2" />
<rect x="703.2" y="329" width="7.2" height="29" fill="#1b1b1b" />
<rect x="704.4" y="331" width="4.8" height="25" rx="1.5" fill="#7c7c7c"/>
<rect x="704.4" y="334" width="4.8" height="4.5" fill="#c4c4c4" />
<rect x="706.2" y="359.5" width="5.4" height="18.5" rx="1.2" fill="#9c9c9c"/>
<rect x="706.2" y="371.5" width="5.4" height="3" fill="#d2d2d2" />
<rect x="712.6" y="329" width="7.2" height="29" fill="#1b1b1b" />
<rect x="713.8" y="331" width="4.8" height="25" rx="1.5" fill="#7c7c7c"/>
<rect x="713.8" y="334" width="4.8" height="4.5" fill="#c4c4c4" />
<rect x="715.6" y="359.5" width="5.4" height="18.5" rx="1.2" fill="#9c9c9c"/>
<rect x="715.6" y="371.5" width="5.4" height="3" fill="#d2d2d2" />
<rect x="531" y="384.2" width="46" height="7.2" fill="#161616" />
<rect x="532" y="386" width="45" height="3.6" rx="1.5" fill="url(#pinh)"/>
<rect x="531" y="393.6" width="46" height="7.2" fill="#161616" />
<rect x="532" y="395.4" width="45" height="3.6" rx="1.5" fill="url(#pinh)"/>
<rect x="531" y="403" width="46" height="7.2" fill="#161616" />
<rect x="532" y="404.8" width="45" height="3.6" rx="1.5" fill="url(#pinh)"/>
<rect x="531" y="412.3" width="46" height="7.2" fill="#161616" />
<rect x="532" y="414.1" width="45" height="3.6" rx="1.5" fill="url(#pinh)"/>
<rect x="531" y="421.7" width="46" height="7.2" fill="#161616" />
<rect x="532" y="423.5" width="45" height="3.6" rx="1.5" fill="url(#pinh)"/>
<rect x="531" y="431.1" width="46" height="7.2" fill="#161616" />
<rect x="532" y="432.9" width="45" height="3.6" rx="1.5" fill="url(#pinh)"/>
<rect x="531" y="440.5" width="46" height="7.2" fill="#161616" />
<rect x="532" y="442.3" width="45" height="3.6" rx="1.5" fill="url(#pinh)"/>
<rect x="531" y="449.9" width="46" height="7.2" fill="#161616" />
<rect x="532" y="451.7" width="45" height="3.6" rx="1.5" fill="url(#pinh)"/>
<rect x="531" y="459.2" width="46" height="7.2" fill="#161616" />
<rect x="532" y="461" width="45" height="3.6" rx="1.5" fill="url(#pinh)"/>
<rect x="531" y="468.6" width="46" height="7.2" fill="#161616" />
<rect x="532" y="470.4" width="45" height="3.6" rx="1.5" fill="url(#pinh)"/>
<rect x="531" y="478" width="46" height="7.2" fill="#161616" />
<rect x="532" y="479.8" width="45" height="3.6" rx="1.5" fill="url(#pinh)"/>
<rect x="531" y="487.4" width="46" height="7.2" fill="#161616" />
<rect x="532" y="489.2" width="45" height="3.6" rx="1.5" fill="url(#pinh)"/>
<rect x="531" y="496.8" width="46" height="7.2" fill="#161616" />
<rect x="532" y="498.6" width="45" height="3.6" rx="1.5" fill="url(#pinh)"/>
<rect x="531" y="506.1" width="46" height="7.2" fill="#161616" />
<rect x="532" y="507.9" width="45" height="3.6" rx="1.5" fill="url(#pinh)"/>
<rect x="531" y="515.5" width="46" height="7.2" fill="#161616" />
<rect x="532" y="517.3" width="45" height="3.6" rx="1.5" fill="url(#pinh)"/>
<rect x="531" y="524.9" width="46" height="7.2" fill="#161616" />
<rect x="532" y="526.7" width="45" height="3.6" rx="1.5" fill="url(#pinh)"/>
<rect x="531" y="534.3" width="46" height="7.2" fill="#161616" />
<rect x="532" y="536.1" width="45" height="3.6" rx="1.5" fill="url(#pinh)"/>
<rect x="531" y="543.7" width="46" height="7.2" fill="#161616" />
<rect x="532" y="545.5" width="45" height="3.6" rx="1.5" fill="url(#pinh)"/>
<rect x="531" y="553" width="46" height="7.2" fill="#161616" />
<rect x="532" y="554.8" width="45" height="3.6" rx="1.5" fill="url(#pinh)"/>
<rect x="531" y="562.4" width="46" height="7.2" fill="#161616" />
<rect x="532" y="564.2" width="45" height="3.6" rx="1.5" fill="url(#pinh)"/>
<rect x="563.5" y="384" width="2.5" height="186" fill="#8a8a8a" opacity="0.55"/>
<rect x="580.5" y="578.5" width="5" height="15.5" rx="2.3" fill="#bebebe"/>
<rect x="580.5" y="599" width="5" height="17" fill="#6e6e6e" />
<rect x="580.5" y="616.5" width="5" height="6" fill="#9a9a9a" />
<rect x="590" y="578.5" width="5" height="15.5" rx="2.3" fill="#bebebe"/>
<rect x="590" y="599" width="5" height="17" fill="#6e6e6e" />
<rect x="590" y="616.5" width="5" height="6" fill="#9a9a9a" />
<rect x="599.4" y="578.5" width="5" height="15.5" rx="2.3" fill="#bebebe"/>
<rect x="599.4" y="599" width="5" height="17" fill="#6e6e6e" />
<rect x="599.4" y="616.5" width="5" height="6" fill="#9a9a9a" />
<rect x="608.9" y="578.5" width="5" height="15.5" rx="2.3" fill="#bebebe"/>
<rect x="608.9" y="599" width="5" height="17" fill="#6e6e6e" />
<rect x="608.9" y="616.5" width="5" height="6" fill="#9a9a9a" />
<rect x="618.3" y="578.5" width="5" height="15.5" rx="2.3" fill="#bebebe"/>
<rect x="618.3" y="599" width="5" height="17" fill="#6e6e6e" />
<rect x="618.3" y="616.5" width="5" height="6" fill="#9a9a9a" />
<rect x="627.8" y="578.5" width="5" height="15.5" rx="2.3" fill="#bebebe"/>
<rect x="627.8" y="599" width="5" height="17" fill="#6e6e6e" />
<rect x="627.8" y="616.5" width="5" height="6" fill="#9a9a9a" />
<rect x="637.3" y="578.5" width="5" height="15.5" rx="2.3" fill="#bebebe"/>
<rect x="637.3" y="599" width="5" height="17" fill="#6e6e6e" />
<rect x="637.3" y="616.5" width="5" height="6" fill="#9a9a9a" />
<rect x="646.7" y="578.5" width="5" height="15.5" rx="2.3" fill="#bebebe"/>
<rect x="646.7" y="599" width="5" height="17" fill="#6e6e6e" />
<rect x="646.7" y="616.5" width="5" height="6" fill="#9a9a9a" />
<rect x="656.2" y="578.5" width="5" height="15.5" rx="2.3" fill="#bebebe"/>
<rect x="656.2" y="599" width="5" height="17" fill="#6e6e6e" />
<rect x="656.2" y="616.5" width="5" height="6" fill="#9a9a9a" />
<rect x="665.6" y="578.5" width="5" height="15.5" rx="2.3" fill="#bebebe"/>
<rect x="665.6" y="599" width="5" height="17" fill="#6e6e6e" />
<rect x="665.6" y="616.5" width="5" height="6" fill="#9a9a9a" />
<rect x="675.1" y="578.5" width="5" height="15.5" rx="2.3" fill="#bebebe"/>
<rect x="675.1" y="599" width="5" height="17" fill="#6e6e6e" />
<rect x="675.1" y="616.5" width="5" height="6" fill="#9a9a9a" />
<rect x="684.6" y="578.5" width="5" height="15.5" rx="2.3" fill="#bebebe"/>
<rect x="684.6" y="599" width="5" height="17" fill="#6e6e6e" />
<rect x="684.6" y="616.5" width="5" height="6" fill="#9a9a9a" />
<rect x="694" y="578.5" width="5" height="15.5" rx="2.3" fill="#bebebe"/>
<rect x="694" y="599" width="5" height="17" fill="#6e6e6e" />
<rect x="694" y="616.5" width="5" height="6" fill="#9a9a9a" />
<rect x="703.5" y="578.5" width="5" height="15.5" rx="2.3" fill="#bebebe"/>
<rect x="703.5" y="599" width="5" height="17" fill="#6e6e6e" />
<rect x="703.5" y="616.5" width="5" height="6" fill="#9a9a9a" />
<rect x="712.9" y="578.5" width="5" height="15.5" rx="2.3" fill="#bebebe"/>
<rect x="712.9" y="599" width="5" height="17" fill="#6e6e6e" />
<rect x="712.9" y="616.5" width="5" height="6" fill="#9a9a9a" />
<rect x="580" y="585.5" width="142" height="2" fill="#d8d8d8" opacity="0.5"/>
<text x="711.5" y="460.5" font-size="38" textLength="15" lengthAdjust="spacingAndGlyphs" fill="#7c7c7c" >R</text>
<polygon points="626,432.2 631.5,432.2 631.5,441.5 636.4,441.5 636.4,432.2 642.5,432.2 642.5,447.6 637.2,447.6 637.2,457 645.5,465.5 645.5,468.5 653,468.5 663.6,479.5 663.6,488 657.4,481.5 657.4,493.3 652.4,493.3 652.4,474.5 637.8,474.5 637.8,467 630.4,458.8 630.4,447.6 626,447.6" fill="#a0a0a0" />
<polygon points="701.2,432.2 695.7,432.2 695.7,441.5 690.8,441.5 690.8,432.2 684.7,432.2 684.7,447.6 690,447.6 690,457 681.7,465.5 681.7,468.5 674.2,468.5 663.6,479.5 663.6,488 669.8,481.5 669.8,493.3 674.8,493.3 674.8,474.5 689.4,474.5 689.4,467 696.8,458.8 696.8,447.6 701.2,447.6" fill="#a0a0a0" />
<path d="M654.6 459 V467.4 H669 V459" fill="none" stroke="#a0a0a0" stroke-width="1.5"/>
<circle cx="654.6" cy="458" r="2.4" fill="#a0a0a0" />
<circle cx="669" cy="458" r="2.4" fill="#a0a0a0" />
<path d="M637.5 476.8 H634.5 A16.2 16.2 0 0 0 618.3 493 V495.5" fill="none" stroke="#a0a0a0" stroke-width="1.8"/>
<path d="M637.5 476.8 H634.5 A16.2 16.2 0 0 0 618.3 493 V495.5" fill="none" stroke="#a0a0a0" stroke-width="1.8" transform="translate(1327.2,0) scale(-1,1)"/>
<path d="M637.5 481.2 H634.5 A11.5 11.5 0 0 0 623 492.7 V498" fill="none" stroke="#a0a0a0" stroke-width="1.8"/>
<path d="M637.5 481.2 H634.5 A11.5 11.5 0 0 0 623 492.7 V498" fill="none" stroke="#a0a0a0" stroke-width="1.8" transform="translate(1327.2,0) scale(-1,1)"/>
<path d="M637.5 485.6 H634.5 A6.5 6.5 0 0 0 628 492.1 V500.2" fill="none" stroke="#a0a0a0" stroke-width="1.8"/>
<path d="M637.5 485.6 H634.5 A6.5 6.5 0 0 0 628 492.1 V500.2" fill="none" stroke="#a0a0a0" stroke-width="1.8" transform="translate(1327.2,0) scale(-1,1)"/>
<path d="M637.5 490 H634.6 A2 2 0 0 0 632.6 492 V502.2" fill="none" stroke="#a0a0a0" stroke-width="1.8"/>
<path d="M637.5 490 H634.6 A2 2 0 0 0 632.6 492 V502.2" fill="none" stroke="#a0a0a0" stroke-width="1.8" transform="translate(1327.2,0) scale(-1,1)"/>
<text x="639.7" y="493.3" font-size="21.5" textLength="11" lengthAdjust="spacingAndGlyphs" fill="#a0a0a0" stroke="#a0a0a0" stroke-width="0.5" >R</text>
<text x="675" y="493.3" font-size="21.5" textLength="11" lengthAdjust="spacingAndGlyphs" fill="#a0a0a0" stroke="#a0a0a0" stroke-width="0.5" >C</text>
<rect x="67.2" y="526.8" width="34.8" height="75.5" rx="0" fill="none" stroke="#fafafa" stroke-width="2.2"/>
<rect x="107.8" y="526.8" width="35.4" height="75.5" rx="0" fill="none" stroke="#fafafa" stroke-width="2.2"/>
<rect x="150" y="526.8" width="36.5" height="75.5" rx="0" fill="none" stroke="#fafafa" stroke-width="2.2"/>
<rect x="70.5" y="530" width="28.5" height="69" fill="#1c1c1c" />
<rect x="73" y="531.5" width="23.5" height="12.5" fill="#5a5a5a" />
<rect x="75" y="534" width="20" height="3" fill="#9a9a9a" />
<rect x="80" y="544" width="7.5" height="36" fill="#6a6a6a" />
<rect x="81.5" y="546" width="2.5" height="32" fill="#b0b0b0" />
<rect x="73" y="577" width="23.5" height="20" fill="#484848" />
<rect x="75" y="579" width="20" height="4" fill="#8a8a8a" />
<polygon points="88,556 99,556 99,566 92,566" fill="#484848" />
<rect x="111" y="530" width="29.5" height="69" fill="#1a1a1a" />
<rect x="112" y="531" width="27.5" height="23" fill="#343434" />
<rect x="112" y="573" width="27.5" height="25" fill="#343434" />
<path d="M115 532 Q121 542.5 115 553 L118.5 553 Q124 542.5 118.5 532 Z" fill="#e2e2e2"/>
<path d="M136.5 532 Q130.5 542.5 136.5 553 L133 553 Q127.5 542.5 133 532 Z" fill="#e2e2e2"/>
<path d="M119 533 Q125.8 539 132.5 533 L130.5 532 L121 532 Z" fill="#bdbdbd"/>
<path d="M115 574.5 Q121 585.8 115 597 L118.5 597 Q124 585.8 118.5 574.5 Z" fill="#e2e2e2"/>
<path d="M136.5 574.5 Q130.5 585.8 136.5 597 L133 597 Q127.5 585.8 133 574.5 Z" fill="#e2e2e2"/>
<path d="M119 575.5 Q125.8 581.5 132.5 575.5 L130.5 574.5 L121 574.5 Z" fill="#bdbdbd"/>
<polygon points="111,558.5 140.5,558.5 140.5,562.5 129.8,569 121.8,569 111,562.5" fill="#e6e6e6" />
<polygon points="119,561 132.5,561 125.8,566.5" fill="#8a8a8a" />
<rect x="153.5" y="530" width="29.5" height="69" fill="#1a1a1a" />
<rect x="154.5" y="531" width="27.5" height="23" fill="#343434" />
<rect x="154.5" y="573" width="27.5" height="25" fill="#343434" />
<path d="M157.5 532 Q163.5 542.5 157.5 553 L161 553 Q166.5 542.5 161 532 Z" fill="#e2e2e2"/>
<path d="M179 532 Q173 542.5 179 553 L175.5 553 Q170 542.5 175.5 532 Z" fill="#e2e2e2"/>
<path d="M161.5 533 Q168.2 539 175 533 L173 532 L163.5 532 Z" fill="#bdbdbd"/>
<path d="M157.5 574.5 Q163.5 585.8 157.5 597 L161 597 Q166.5 585.8 161 574.5 Z" fill="#e2e2e2"/>
<path d="M179 574.5 Q173 585.8 179 597 L175.5 597 Q170 585.8 175.5 574.5 Z" fill="#e2e2e2"/>
<path d="M161.5 575.5 Q168.2 581.5 175 575.5 L173 574.5 L163.5 574.5 Z" fill="#bdbdbd"/>
<polygon points="153.5,558.5 183,558.5 183,562.5 172.2,569 164.2,569 153.5,562.5" fill="#e6e6e6" />
<polygon points="161.5,561 175,561 168.2,566.5" fill="#8a8a8a" />
<rect x="191.2" y="526.8" width="56.1" height="20.4" rx="10.2" ry="10.2" fill="none" stroke="#ececec" stroke-width="2"/>
<rect x="198" y="530.5" width="43" height="13" fill="#1b1b1b" />
<rect x="211.5" y="531.5" width="18" height="11" fill="#565656" />
<rect x="203" y="532" width="8" height="10" fill="#8a8a8a" />
<rect x="230" y="532" width="8.5" height="10" fill="#8a8a8a" />
<rect x="191.2" y="550.6" width="56.1" height="20.4" rx="10.2" ry="10.2" fill="none" stroke="#ececec" stroke-width="2"/>
<rect x="198" y="554.3" width="43" height="13" fill="#1b1b1b" />
<rect x="211.5" y="555.3" width="18" height="11" fill="#565656" />
<rect x="203" y="555.8" width="8" height="10" fill="#8a8a8a" />
<rect x="230" y="555.8" width="8.5" height="10" fill="#8a8a8a" />
<rect x="191.2" y="574.4" width="56.1" height="23.4" rx="11.7" ry="11.7" fill="none" stroke="#ececec" stroke-width="2"/>
<rect x="198" y="579.6" width="43" height="13" fill="#1b1b1b" />
<rect x="211.5" y="580.6" width="18" height="11" fill="#565656" />
<rect x="203" y="581.1" width="8" height="10" fill="#8a8a8a" />
<rect x="230" y="581.1" width="8.5" height="10" fill="#8a8a8a" />
<text x="214.5" y="540.5" font-size="8" textLength="12" lengthAdjust="spacingAndGlyphs" fill="#9a9a9a" >001</text>
<text x="214.5" y="564.3" font-size="8" textLength="12" lengthAdjust="spacingAndGlyphs" fill="#9a9a9a" >101</text>
<text x="214.5" y="589.5" font-size="8" textLength="12" lengthAdjust="spacingAndGlyphs" fill="#8a8a8a" >215</text>
<polygon points="233,533 240,537 233,541" fill="#f0f0f0" />
<circle cx="236.5" cy="537" r="2.2" fill="#f4f4f4" />
<polygon points="208,556.5 201,560.8 208,565" fill="#f0f0f0" />
<circle cx="204.5" cy="560.8" r="2.2" fill="#f4f4f4" />
<circle cx="238.5" cy="560.8" r="1.6" fill="#ccc" />
<polygon points="208,581.5 201,586 208,590.5" fill="#f0f0f0" />
<circle cx="204.5" cy="586" r="2.4" fill="#f4f4f4" />
<circle cx="238.5" cy="586" r="1.6" fill="#bbb" />
<rect x="270" y="543" width="23.5" height="49" fill="#222" />
<rect x="272.7" y="545.5" width="18.8" height="44.5" fill="#141414" />
<rect x="291.5" y="556" width="13" height="22" fill="#1a1a1a" />
<circle cx="297" cy="560" r="3.5" fill="#3a3a3a" />
<rect x="262" y="547" width="11" height="8" fill="#3a3a3a" />
<polygon points="262,545.5 269.5,551 262,556.5" fill="#f4f4f4" />
<rect x="262" y="576" width="11" height="8" fill="#3a3a3a" />
<rect x="262.5" y="576.5" width="2.5" height="7.5" fill="#e8e8e8" />
<rect x="268" y="578.5" width="3.5" height="4" fill="#cfcfcf" />
<rect x="310.6" y="542.6" width="21.4" height="57.4" rx="10.7" ry="10.7" fill="none" stroke="#e0e0e0" stroke-width="2"/>
<rect x="315.5" y="549" width="12" height="45" fill="#1b1b1b" />
<rect x="317" y="562.5" width="9.5" height="16" fill="#5a5a5a" />
<rect x="319" y="566" width="5.5" height="8.5" fill="#333" />
<rect x="317" y="557.5" width="9.5" height="5" fill="#777" />
<rect x="317" y="578.5" width="9.5" height="4.5" fill="#6a6a6a" />
<circle cx="318" cy="552.5" r="1.3" fill="#ddd" />
<circle cx="321.5" cy="549.5" r="1.3" fill="#eee" />
<circle cx="321" cy="544" r="2.2" fill="#0a0a0a" />
<rect x="412.2" y="580" width="21.6" height="58.6" rx="10.8" ry="10.8" fill="none" stroke="#e8e8e8" stroke-width="2.4"/>
<rect x="416.5" y="598" width="12" height="34" fill="#1b1b1b" />
<rect x="417.5" y="603" width="10" height="16" fill="#585858" />
<rect x="419.5" y="606" width="6" height="10" fill="#333" />
<rect x="417.5" y="619" width="10" height="4.5" fill="#808080" />
<circle cx="418" cy="628.5" r="1.2" fill="#ddd" />
<circle cx="427.5" cy="628.5" r="1.2" fill="#ddd" />
<polyline points="427,592 430,588" fill="none" stroke="#ddd" stroke-width="1.5" />
<ellipse cx="388" cy="566" rx="44" ry="42.5" fill="url(#canside)"/>
<path d="M353 548 A44 44 0 0 1 372 529 L380 540 A32 32 0 0 0 366 556 Z" fill="#1a1a1a"/>
<polygon points="372,529 377,526 407,526 412,529 404,542 380,542" fill="#4e4e4e" />
<path d="M385 542 v-8 a4.5 4.5 0 0 1 9 0 v8" stroke="#141414" stroke-width="3" fill="none"/>
<circle cx="390.7" cy="567.5" r="30.5" fill="#161616" />
<circle cx="390.7" cy="567.3" r="29.5" fill="url(#capg)" />
<circle cx="390.7" cy="567.3" r="29" fill="#fff" filter="url(#mottle)" opacity="0.45"/>
<polyline points="381,590 399,545" fill="none" stroke="#b4b4b4" stroke-width="1.2" opacity="0.5"/>
<rect x="246" y="615" width="105" height="59.2" rx="0" fill="none" stroke="#fafafa" stroke-width="2.3"/>
<rect x="250" y="619" width="97" height="51" fill="#1c1c1c" />
<rect x="252" y="621" width="93" height="47" fill="#262626" />
<path d="M262 628 Q252 643 262 660" stroke="#d8d8d8" stroke-width="3" fill="none"/>
<rect x="254" y="622" width="26" height="6" fill="#4a4a4a" />
<rect x="318" y="621" width="25" height="6" fill="#4a4a4a" />
<rect x="266.7" y="625.7" width="55.6" height="35.8" fill="#0f0f0f" />
<rect x="322.3" y="625.7" width="10.9" height="32.3" fill="#5a5a5a" />
<rect x="337" y="629" width="6" height="28" fill="#c8c8c8" />
<rect x="339" y="627" width="3" height="34" fill="#eee" />
<rect x="306" y="664" width="3" height="4.5" fill="#bbb" />
<rect x="316" y="663.5" width="24" height="2" fill="#666" />
<text transform="translate(315,645.5) rotate(180)" font-size="11.5" textLength="28" lengthAdjust="spacingAndGlyphs" fill="#4e4e4e">SS12</text>
<path d="M127 659 L87.9 653.5 A39.5 39.5 0 0 0 108.5 693.9 Z" fill="#c2c2c2"/>
<path d="M91.5 645.4 A38 38 0 0 1 164.4 665.6" stroke="#fafafa" stroke-width="3" fill="none"/>
<ellipse cx="131" cy="664" rx="32" ry="39" fill="#0e0e0e"/>
<path d="M101 652 A31 28 0 0 1 161 652 A30 20 0 0 0 101 652 Z" fill="#2c2c2c"/>
<path d="M104 662 A28 26 0 0 1 159 660" stroke="#2a2a2a" stroke-width="3" fill="none"/>
<path d="M112 672 A22 22 0 0 1 124 654" stroke="#3a3a3a" stroke-width="1.5" fill="none"/>
<polygon points="129.5,690 147,688 150,703 127,705" fill="#4c4c4c" />
<polygon points="122,694 130,690 127.5,704 120,700" fill="#0e0e0e" />
<circle cx="135" cy="674.5" r="18" fill="url(#cap2)" />
<circle cx="135" cy="674.5" r="15" fill="#fff" filter="url(#mottle2)" opacity="0.4"/>
<polyline points="60,666.5 86.8,666.5 86.8,645.5" fill="none" stroke="#d8d8d8" stroke-width="2.2" />
<rect x="62" y="647" width="22" height="17" fill="#1c1c1c" />
<rect x="64" y="650" width="14" height="11" fill="#4a4a4a" />
<rect x="596.2" y="645" width="53.4" height="22.5" rx="0" fill="none" stroke="#fafafa" stroke-width="2.5"/>
<rect x="599" y="648" width="48" height="16.5" fill="#1a1a1a" />
<rect x="603" y="650" width="3" height="11" fill="#e0e0e0" />
<rect x="611" y="651" width="7" height="10" fill="#7a7a7a" />
<rect x="628" y="651" width="6" height="10" fill="#7a7a7a" />
<rect x="640" y="650" width="3" height="11" fill="#e0e0e0" />
<circle cx="596" cy="664.5" r="2.8" fill="#050505" />
<path d="M68.1 734 V721.6 Q68.1 715.6 71.9 714.1 V705.1 H75.9 V714.1 Q79.7 715.6 79.7 721.6 V734 Z" fill="#242424"/>
<path d="M68.1 734 V721.6 Q68.1 715.6 71.9 714.1 M75.9 714.1 Q79.7 715.6 79.7 721.6 V734" fill="none" stroke="#c2c2c2" stroke-width="1.5"/>
<path d="M86.9 734 V721.8 Q86.9 715.8 90.7 714.3 V705.3 H94.7 V714.3 Q98.5 715.8 98.5 721.8 V734 Z" fill="#242424"/>
<path d="M86.9 734 V721.8 Q86.9 715.8 90.7 714.3 M94.7 714.3 Q98.5 715.8 98.5 721.8 V734" fill="none" stroke="#c2c2c2" stroke-width="1.5"/>
<path d="M105.4 734 V722 Q105.4 716 109.2 714.5 V705.5 H113.2 V714.5 Q117 716 117 722 V734 Z" fill="#242424"/>
<path d="M105.4 734 V722 Q105.4 716 109.2 714.5 M113.2 714.5 Q117 716 117 722 V734" fill="none" stroke="#c2c2c2" stroke-width="1.5"/>
<path d="M161.3 734 V722.5 Q161.3 716.5 165.1 715 V706 H169.1 V715 Q172.9 716.5 172.9 722.5 V734 Z" fill="#242424"/>
<path d="M161.3 734 V722.5 Q161.3 716.5 165.1 715 M169.1 715 Q172.9 716.5 172.9 722.5 V734" fill="none" stroke="#c2c2c2" stroke-width="1.5"/>
<path d="M198 734 V722.9 Q198 716.9 201.8 715.4 V706.4 H205.8 V715.4 Q209.6 716.9 209.6 722.9 V734 Z" fill="#242424"/>
<path d="M198 734 V722.9 Q198 716.9 201.8 715.4 M205.8 715.4 Q209.6 716.9 209.6 722.9 V734" fill="none" stroke="#c2c2c2" stroke-width="1.5"/>
<path d="M271.8 734 V723.6 Q271.8 717.6 275.6 716.1 V707.1 H279.6 V716.1 Q283.4 717.6 283.4 723.6 V734 Z" fill="#242424"/>
<path d="M271.8 734 V723.6 Q271.8 717.6 275.6 716.1 M279.6 716.1 Q283.4 717.6 283.4 723.6 V734" fill="none" stroke="#c2c2c2" stroke-width="1.5"/>
<path d="M290.7 734 V723.7 Q290.7 717.7 294.5 716.2 V707.2 H298.5 V716.2 Q302.3 717.7 302.3 723.7 V734 Z" fill="#242424"/>
<path d="M290.7 734 V723.7 Q290.7 717.7 294.5 716.2 M298.5 716.2 Q302.3 717.7 302.3 723.7 V734" fill="none" stroke="#c2c2c2" stroke-width="1.5"/>
<path d="M308.5 734 V723.9 Q308.5 717.9 312.3 716.4 V707.4 H316.3 V716.4 Q320.1 717.9 320.1 723.9 V734 Z" fill="#242424"/>
<path d="M308.5 734 V723.9 Q308.5 717.9 312.3 716.4 M316.3 716.4 Q320.1 717.9 320.1 723.9 V734" fill="none" stroke="#c2c2c2" stroke-width="1.5"/>
<path d="M327.4 734 V724.1 Q327.4 718.1 331.2 716.6 V707.6 H335.2 V716.6 Q339 718.1 339 724.1 V734 Z" fill="#242424"/>
<path d="M327.4 734 V724.1 Q327.4 718.1 331.2 716.6 M335.2 716.6 Q339 718.1 339 724.1 V734" fill="none" stroke="#c2c2c2" stroke-width="1.5"/>
<path d="M364.1 734 V724.4 Q364.1 718.4 367.9 716.9 V707.9 H371.9 V716.9 Q375.7 718.4 375.7 724.4 V734 Z" fill="#242424"/>
<path d="M364.1 734 V724.4 Q364.1 718.4 367.9 716.9 M371.9 716.9 Q375.7 718.4 375.7 724.4 V734" fill="none" stroke="#c2c2c2" stroke-width="1.5"/>
<path d="M381.9 734 V724.6 Q381.9 718.6 385.7 717.1 V708.1 H389.7 V717.1 Q393.5 718.6 393.5 724.6 V734 Z" fill="#242424"/>
<path d="M381.9 734 V724.6 Q381.9 718.6 385.7 717.1 M389.7 717.1 Q393.5 718.6 393.5 724.6 V734" fill="none" stroke="#c2c2c2" stroke-width="1.5"/>
<path d="M400.8 734 V724.8 Q400.8 718.8 404.6 717.3 V708.3 H408.6 V717.3 Q412.4 718.8 412.4 724.8 V734 Z" fill="#242424"/>
<path d="M400.8 734 V724.8 Q400.8 718.8 404.6 717.3 M408.6 717.3 Q412.4 718.8 412.4 724.8 V734" fill="none" stroke="#c2c2c2" stroke-width="1.5"/>
<path d="M419.6 734 V725 Q419.6 719 423.4 717.5 V708.5 H427.4 V717.5 Q431.2 719 431.2 725 V734 Z" fill="#242424"/>
<path d="M419.6 734 V725 Q419.6 719 423.4 717.5 M427.4 717.5 Q431.2 719 431.2 725 V734" fill="none" stroke="#c2c2c2" stroke-width="1.5"/>
<path d="M437.9 734 V725.1 Q437.9 719.1 441.7 717.6 V708.6 H445.7 V717.6 Q449.5 719.1 449.5 725.1 V734 Z" fill="#242424"/>
<path d="M437.9 734 V725.1 Q437.9 719.1 441.7 717.6 M445.7 717.6 Q449.5 719.1 449.5 725.1 V734" fill="none" stroke="#c2c2c2" stroke-width="1.5"/>
<path d="M475.2 734 V725.5 Q475.2 719.5 479 718 V709 H483 V718 Q486.8 719.5 486.8 725.5 V734 Z" fill="#242424"/>
<path d="M475.2 734 V725.5 Q475.2 719.5 479 718 M483 718 Q486.8 719.5 486.8 725.5 V734" fill="none" stroke="#c2c2c2" stroke-width="1.5"/>
<path d="M492.8 734 V725.7 Q492.8 719.7 496.6 718.2 V709.2 H500.6 V718.2 Q504.4 719.7 504.4 725.7 V734 Z" fill="#242424"/>
<path d="M492.8 734 V725.7 Q492.8 719.7 496.6 718.2 M500.6 718.2 Q504.4 719.7 504.4 725.7 V734" fill="none" stroke="#c2c2c2" stroke-width="1.5"/>
<path d="M511.2 734 V725.8 Q511.2 719.8 515 718.3 V709.3 H519 V718.3 Q522.8 719.8 522.8 725.8 V734 Z" fill="#242424"/>
<path d="M511.2 734 V725.8 Q511.2 719.8 515 718.3 M519 718.3 Q522.8 719.8 522.8 725.8 V734" fill="none" stroke="#c2c2c2" stroke-width="1.5"/>
<path d="M529.7 734 V726 Q529.7 720 533.5 718.5 V709.5 H537.5 V718.5 Q541.3 720 541.3 726 V734 Z" fill="#242424"/>
<path d="M529.7 734 V726 Q529.7 720 533.5 718.5 M537.5 718.5 Q541.3 720 541.3 726 V734" fill="none" stroke="#c2c2c2" stroke-width="1.5"/>
<path d="M548 734 V726.2 Q548 720.2 551.8 718.7 V709.7 H555.8 V718.7 Q559.6 720.2 559.6 726.2 V734 Z" fill="#242424"/>
<path d="M548 734 V726.2 Q548 720.2 551.8 718.7 M555.8 718.7 Q559.6 720.2 559.6 726.2 V734" fill="none" stroke="#c2c2c2" stroke-width="1.5"/>
<path d="M584.6 734 V726.5 Q584.6 720.5 588.4 719 V710 H592.4 V719 Q596.2 720.5 596.2 726.5 V734 Z" fill="#242424"/>
<path d="M584.6 734 V726.5 Q584.6 720.5 588.4 719 M592.4 719 Q596.2 720.5 596.2 726.5 V734" fill="none" stroke="#c2c2c2" stroke-width="1.5"/>
<path d="M603 734 V726.7 Q603 720.7 606.8 719.2 V710.2 H610.8 V719.2 Q614.6 720.7 614.6 726.7 V734 Z" fill="#242424"/>
<path d="M603 734 V726.7 Q603 720.7 606.8 719.2 M610.8 719.2 Q614.6 720.7 614.6 726.7 V734" fill="none" stroke="#c2c2c2" stroke-width="1.5"/>
<path d="M621.2 734 V726.9 Q621.2 720.9 625 719.4 V710.4 H629 V719.4 Q632.8 720.9 632.8 726.9 V734 Z" fill="#242424"/>
<path d="M621.2 734 V726.9 Q621.2 720.9 625 719.4 M629 719.4 Q632.8 720.9 632.8 726.9 V734" fill="none" stroke="#c2c2c2" stroke-width="1.5"/>
<path d="M640.2 734 V727.1 Q640.2 721.1 644 719.6 V710.6 H648 V719.6 Q651.8 721.1 651.8 727.1 V734 Z" fill="#242424"/>
<path d="M640.2 734 V727.1 Q640.2 721.1 644 719.6 M648 719.6 Q651.8 721.1 651.8 727.1 V734" fill="none" stroke="#c2c2c2" stroke-width="1.5"/>
<path d="M677.2 734 V727.4 Q677.2 721.4 681 719.9 V710.9 H685 V719.9 Q688.8 721.4 688.8 727.4 V734 Z" fill="#242424"/>
<path d="M677.2 734 V727.4 Q677.2 721.4 681 719.9 M685 719.9 Q688.8 721.4 688.8 727.4 V734" fill="none" stroke="#c2c2c2" stroke-width="1.5"/>
<path d="M695.2 734 V727.6 Q695.2 721.6 699 720.1 V711.1 H703 V720.1 Q706.8 721.6 706.8 727.6 V734 Z" fill="#242424"/>
<path d="M695.2 734 V727.6 Q695.2 721.6 699 720.1 M703 720.1 Q706.8 721.6 706.8 727.6 V734" fill="none" stroke="#c2c2c2" stroke-width="1.5"/>
</g>
<rect x="60" y="238" width="662" height="496" filter="url(#noise)" opacity="0.9"/>
</g>
<path d="M60.5 733 V238.5 H721.5 M60.5 732.6 H721.5" stroke="#e6e6e6" stroke-width="1" fill="none"/>
<rect x="340" y="379" width="118.5" height="111" fill="rgb(30,144,255)" fill-opacity="0.5"/>
<rect x="338.5" y="377.5" width="121.5" height="114" fill="none" stroke="#7c8ea8" stroke-width="4" opacity="0.55"/>
<rect x="339" y="377.5" width="120.5" height="114" fill="none" stroke="#6495ed" stroke-width="2.2"/>
<path d="M393.5 435 H405.5 M399.5 429 V441" stroke="#e8e020" stroke-width="2" fill="none"/>
<rect x="160" y="217" width="1" height="536" fill="#46466e"/>
<rect x="261" y="217" width="1" height="536" fill="#46466e"/>
<rect x="361" y="217" width="1" height="536" fill="#46466e"/>
<rect x="462" y="217" width="1" height="536" fill="#46466e"/>
<rect x="562" y="217" width="1" height="536" fill="#46466e"/>
<rect x="663" y="217" width="1" height="536" fill="#46466e"/>
<rect x="60" y="338" width="661" height="1" fill="#46466e"/>
<rect x="60" y="439" width="661" height="1" fill="#46466e"/>
<rect x="60" y="539" width="661" height="1" fill="#46466e"/>
<rect x="60" y="640" width="661" height="1" fill="#46466e"/>
<rect x="60" y="740" width="661" height="1" fill="#46466e"/>
<rect x="60" y="217" width="1" height="21" fill="#46466e"/>
<g font-family='"DejaVu Sans", sans-serif' font-size="11" fill="#40406a">
<text x="62.6" y="228.4">0</text>
<text x="162.6" y="228.4">100</text>
<text x="263.6" y="228.4">200</text>
<text x="363.6" y="228.4">300</text>
<text x="464.6" y="228.4">400</text>
<text x="564.6" y="228.4">500</text>
<text x="665.6" y="228.4">600</text>
<text x="62" y="249">0</text>
<text x="62" y="349">100</text>
<text x="62" y="450">200</text>
<text x="62" y="550">300</text>
<text x="62" y="651">400</text>
<text x="62" y="751">500</text>
</g>
<circle cx="60.5" cy="238.5" r="7" fill="none" stroke="#46466e" stroke-width="1"/>
</svg><!--/PCB--></div>

<!-- right panel -->
<span class="lbl" style="left:732px;top:238px;font-size:11px;">Rotation Tolerance: 180°</span>
<div class="abs" style="left:737px;top:266px;width:242px;height:4px;box-sizing:border-box;border:1px solid #d6d6d6;background:#e7eaea;"></div>
<svg class="abs" style="left:971px;top:260px" width="11" height="19"><path d="M0 0 H11 V13.5 L5.5 19 L0 13.5 Z" fill="#0078d7"/></svg>
<div class="abs" style="left:742px;top:280px;width:235px;height:3px;background:repeating-linear-gradient(90deg,#c6c6c6 0,#c6c6c6 1.7px,#e2e2e2 1.7px,#e2e2e2 2.6px);"></div>
<span class="lbl" style="left:732px;top:312px;font-size:11px;letter-spacing:-0.3px;">Minimal Pyramid Level: 0</span>
<div class="abs" style="left:737px;top:340px;width:242px;height:4px;box-sizing:border-box;border:1px solid #d6d6d6;background:#e7eaea;"></div>
<svg class="abs" style="left:737px;top:334px" width="11" height="19"><path d="M0 0 H11 V13.5 L5.5 19 L0 13.5 Z" fill="#0078d7"/></svg>
<div class="abs" style="left:742px;top:354px;width:1px;height:3px;background:#b4b4b4;"></div>
<div class="abs" style="left:819px;top:354px;width:1px;height:3px;background:#c4c4c4;"></div>
<div class="abs" style="left:896px;top:354px;width:1px;height:3px;background:#c4c4c4;"></div>
<div class="abs" style="left:973px;top:354px;width:1px;height:3px;background:#c4c4c4;"></div>
<div class="abs" style="left:729px;top:404px;width:13px;height:13px;box-sizing:border-box;border:1px solid #333;background:#fff;"></div>
<svg class="abs" style="left:729px;top:404px" width="13" height="13"><path d="M2.6 6.4 L5.2 9.2 L10.4 3.4" fill="none" stroke="#111" stroke-width="1.3"/></svg>
<span class="lbl" style="left:748px;top:405px;font-size:11px;letter-spacing:-0.1px;">Show object center</span>
<svg class="abs" style="left:6px;top:763px" width="24" height="24" viewBox="0 0 24 24"><defs><radialGradient id="hg" cx="0.4" cy="0.3" r="0.8"><stop offset="0" stop-color="#8ec0ea"/><stop offset="0.6" stop-color="#4a8cc8"/><stop offset="1" stop-color="#2c66a4"/></radialGradient></defs><circle cx="12" cy="12" r="11.2" fill="#e4e4e4" stroke="#c0c0c0" stroke-width="0.8"/><circle cx="12" cy="12" r="9.2" fill="url(#hg)" stroke="#2d5f96" stroke-width="0.8"/><text x="12" y="17" text-anchor="middle" font-size="14" font-weight="bold" fill="#fff" font-family="Liberation Sans, sans-serif">?</text></svg>
<!-- bottom buttons -->
<div class="btn" style="left:808px;top:765px;width:92px;height:22px;border:2px solid #0078d7;line-height:19px;font-size:11px;">OK</div>
<div class="btn" style="left:908px;top:765px;width:92px;height:22px;line-height:21px;font-size:11px;">Cancel</div>
</body>
</html>
